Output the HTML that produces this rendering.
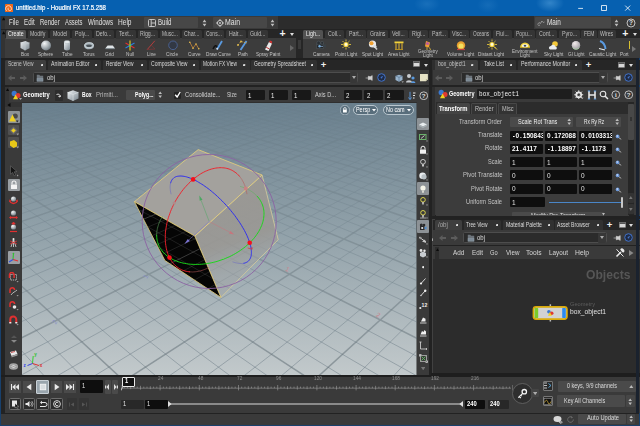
<!DOCTYPE html>
<html><head><meta charset="utf-8"><title>untitled.hip - Houdini FX 17.5.258</title>
<style>
html,body{margin:0;padding:0;background:#2b2b2b;overflow:hidden}
#app{position:relative;width:640px;height:426px;overflow:hidden;background:#262626;font-family:"Liberation Sans",sans-serif}
#app div,#app svg,#app .t{position:absolute}
#app div{box-sizing:border-box}
.t{white-space:nowrap;transform-origin:0 50%;display:block}
</style></head><body><div id="app">
<div style="left:0px;top:0px;width:640px;height:16px;background:#0660b0;background-image:radial-gradient(ellipse 14px 9px at 550px 3px,rgba(120,190,240,.38),rgba(120,190,240,0)),radial-gradient(ellipse 13px 8px at 427px 4px,rgba(120,190,240,.16),rgba(120,190,240,0)),radial-gradient(ellipse 11px 8px at 488px 5px,rgba(120,190,240,.12),rgba(120,190,240,0))"></div>
<svg style="left:4.7px;top:3.6px;" width="8.2" height="8.2" viewBox="0 0 8.2 8.2"><rect x="0" y="0" width="8.2" height="8.2" rx=".8" fill="#f06a1c"/><path d="M1.6 6.8A2.9 2.9 0 1 1 6.4 4.4A1.7 1.7 0 1 1 3.5 3.8" fill="none" stroke="#fde3cf" stroke-width=".9"/></svg>
<span class="t" style="left:16px;top:4.19px;font:7.7px/7.7px 'Liberation Sans',sans-serif;color:#fff;transform:scaleX(0.788);-webkit-text-stroke:.22px #fff">untitled.hip - Houdini FX 17.5.258</span>
<svg style="left:576px;top:3px;" width="58" height="10" viewBox="0 0 58 10"><path d="M2.2 5.4h4.8" stroke="#fff" stroke-width=".8"/><rect x="25.6" y="2.6" width="4.8" height="4.8" fill="none" stroke="#fff" stroke-width=".8"/><path d="M49.2 2.6l5 5M54.2 2.6l-5 5" stroke="#fff" stroke-width=".8"/></svg>
<div style="left:0px;top:16px;width:640px;height:410px;background:#18406c;"></div>
<div style="left:1.4px;top:16px;width:637.2px;height:409.2px;background:#232323;"></div>
<div style="left:5.3px;top:16.3px;width:634px;height:13px;background:#3a3a3a;"></div>
<div style="left:1.3px;top:16.3px;width:3.7px;height:13px;background:#333;"></div>
<svg style="left:1.5px;top:17px;" width="3.5" height="4" viewBox="0 0 3.5 4"><path d="M0 3.2L1.7 .3L3.4 3.2z" fill="#0a0a0a"/></svg>
<span class="t" style="left:9px;top:18.62px;font:8.2px/8.2px 'Liberation Sans',sans-serif;color:#e0e0e0;transform:scaleX(0.742);">File</span>
<span class="t" style="left:24px;top:18.62px;font:8.2px/8.2px 'Liberation Sans',sans-serif;color:#e0e0e0;transform:scaleX(0.757);">Edit</span>
<span class="t" style="left:40px;top:18.62px;font:8.2px/8.2px 'Liberation Sans',sans-serif;color:#e0e0e0;transform:scaleX(0.733);">Render</span>
<span class="t" style="left:65px;top:18.62px;font:8.2px/8.2px 'Liberation Sans',sans-serif;color:#e0e0e0;transform:scaleX(0.711);">Assets</span>
<span class="t" style="left:87.8px;top:18.62px;font:8.2px/8.2px 'Liberation Sans',sans-serif;color:#e0e0e0;transform:scaleX(0.758);">Windows</span>
<span class="t" style="left:117.5px;top:18.62px;font:8.2px/8.2px 'Liberation Sans',sans-serif;color:#e0e0e0;transform:scaleX(0.801);">Help</span>
<div style="left:143.5px;top:17.3px;width:54px;height:11px;background:#474747;border-radius:1px"></div>
<svg style="left:148px;top:19px;" width="8" height="8" viewBox="0 0 8 8"><rect x=".5" y=".5" width="7" height="7" rx="1" fill="none" stroke="#d0d0d0" stroke-width=".9"/><path d="M3.2 .5v7M3.2 4h4" stroke="#d0d0d0" stroke-width=".9"/></svg>
<span class="t" style="left:157.5px;top:18.62px;font:8.2px/8.2px 'Liberation Sans',sans-serif;color:#e0e0e0;transform:scaleX(0.740);">Build</span>
<svg style="left:202px;top:19px;" width="5" height="8" viewBox="0 0 5 8"><path d="M.6 3.2L2.5 .6L4.4 3.2zM.6 4.8L2.5 7.4L4.4 4.8z" fill="#bdbdbd"/></svg>
<div style="left:212.5px;top:17.3px;width:54px;height:11px;background:#474747;border-radius:1px"></div>
<svg style="left:215.5px;top:19px;" width="8" height="8" viewBox="0 0 8 8"><circle cx="4" cy="4" r="2.6" fill="none" stroke="#d0d0d0" stroke-width=".9"/><circle cx="4" cy="4" r=".9" fill="#d0d0d0"/><path d="M4 0v1.6M4 6.4V8M0 4h1.6M6.4 4H8" stroke="#d0d0d0" stroke-width=".9"/></svg>
<span class="t" style="left:225px;top:18.62px;font:8.2px/8.2px 'Liberation Sans',sans-serif;color:#e0e0e0;transform:scaleX(0.844);">Main</span>
<svg style="left:270px;top:19px;" width="5" height="8" viewBox="0 0 5 8"><path d="M.6 3.2L2.5 .6L4.4 3.2zM.6 4.8L2.5 7.4L4.4 4.8z" fill="#bdbdbd"/></svg>
<div style="left:278px;top:16.3px;width:256px;height:13px;background:#2c2c2c;"></div>
<div style="left:534px;top:16.3px;width:106px;height:13px;background:#3a3a3a;"></div>
<div style="left:535px;top:17.3px;width:76px;height:11px;background:#474747;border-radius:1px"></div>
<svg style="left:537px;top:19.5px;" width="8" height="7" viewBox="0 0 8 7"><path d="M.5 4.5l1.5-2 1.5 1 1.3-2.5 1.4 1.5 1.3-.5" fill="none" stroke="#9a9a9a" stroke-width=".9"/><circle cx="2" cy="5.3" r=".8" fill="#9a9a9a"/></svg>
<span class="t" style="left:546.6px;top:18.62px;font:8.2px/8.2px 'Liberation Sans',sans-serif;color:#e0e0e0;transform:scaleX(0.782);">Main</span>
<svg style="left:614px;top:19px;" width="5" height="8" viewBox="0 0 5 8"><path d="M.6 3.2L2.5 .6L4.4 3.2zM.6 4.8L2.5 7.4L4.4 4.8z" fill="#bdbdbd"/></svg>
<svg style="left:626px;top:18px;" width="10" height="10" viewBox="0 0 10 10"><circle cx="5" cy="5" r="4" fill="#3a3a3a" stroke="#cfcfcf" stroke-width=".9"/><text x="5" y="7.3" font-size="6.5" font-weight="bold" text-anchor="middle" fill="#e0e0e0" font-family="Liberation Sans,sans-serif">?</text></svg>
<div style="left:5.3px;top:29.6px;width:290.7px;height:9px;background:#262626;"></div>
<div style="left:5.3px;top:38.4px;width:290.7px;height:19.8px;background:#3c3c3c;"></div>
<div style="left:5.6px;top:30px;width:20.8px;height:8.6px;background:#525252;border-radius:1.5px 1.5px 0 0"></div>
<span class="t" style="left:8.12px;top:31.4px;font:6.4px/6.4px 'Liberation Sans',sans-serif;color:#f0f0f0;transform:scaleX(0.820);">Create</span>
<div style="left:27.6px;top:30.3px;width:20.8px;height:8.6px;background:#353535;border-radius:1.5px 1.5px 0 0"></div>
<span class="t" style="left:30.27px;top:31.4px;font:6.4px/6.4px 'Liberation Sans',sans-serif;color:#bcbcbc;transform:scaleX(0.820);">Modify</span>
<div style="left:49.6px;top:30.3px;width:20.8px;height:8.6px;background:#353535;border-radius:1.5px 1.5px 0 0"></div>
<span class="t" style="left:52.85px;top:31.4px;font:6.4px/6.4px 'Liberation Sans',sans-serif;color:#bcbcbc;transform:scaleX(0.820);">Model</span>
<div style="left:71.6px;top:30.3px;width:20.8px;height:8.6px;background:#353535;border-radius:1.5px 1.5px 0 0"></div>
<span class="t" style="left:74.9px;top:31.4px;font:6.4px/6.4px 'Liberation Sans',sans-serif;color:#bcbcbc;transform:scaleX(0.820);">Poly...</span>
<div style="left:93.6px;top:30.3px;width:20.8px;height:8.6px;background:#353535;border-radius:1.5px 1.5px 0 0"></div>
<span class="t" style="left:96.27px;top:31.4px;font:6.4px/6.4px 'Liberation Sans',sans-serif;color:#bcbcbc;transform:scaleX(0.820);">Defo...</span>
<div style="left:115.6px;top:30.3px;width:20.8px;height:8.6px;background:#353535;border-radius:1.5px 1.5px 0 0"></div>
<span class="t" style="left:119px;top:31.4px;font:6.4px/6.4px 'Liberation Sans',sans-serif;color:#bcbcbc;transform:scaleX(0.820);">Text...</span>
<div style="left:137.6px;top:30.3px;width:20.8px;height:8.6px;background:#353535;border-radius:1.5px 1.5px 0 0"></div>
<span class="t" style="left:140.42px;top:31.4px;font:6.4px/6.4px 'Liberation Sans',sans-serif;color:#bcbcbc;transform:scaleX(0.820);">Rigg...</span>
<div style="left:159.6px;top:30.3px;width:20.8px;height:8.6px;background:#353535;border-radius:1.5px 1.5px 0 0"></div>
<span class="t" style="left:162.1px;top:31.4px;font:6.4px/6.4px 'Liberation Sans',sans-serif;color:#bcbcbc;transform:scaleX(0.766);">Musc...</span>
<div style="left:181.6px;top:30.3px;width:20.8px;height:8.6px;background:#353535;border-radius:1.5px 1.5px 0 0"></div>
<span class="t" style="left:184.27px;top:31.4px;font:6.4px/6.4px 'Liberation Sans',sans-serif;color:#bcbcbc;transform:scaleX(0.820);">Char...</span>
<div style="left:203.6px;top:30.3px;width:20.8px;height:8.6px;background:#353535;border-radius:1.5px 1.5px 0 0"></div>
<span class="t" style="left:206.1px;top:31.4px;font:6.4px/6.4px 'Liberation Sans',sans-serif;color:#bcbcbc;transform:scaleX(0.779);">Cons...</span>
<div style="left:225.6px;top:30.3px;width:20.8px;height:8.6px;background:#353535;border-radius:1.5px 1.5px 0 0"></div>
<span class="t" style="left:229.15px;top:31.4px;font:6.4px/6.4px 'Liberation Sans',sans-serif;color:#bcbcbc;transform:scaleX(0.820);">Hair...</span>
<div style="left:247.6px;top:30.3px;width:20.8px;height:8.6px;background:#353535;border-radius:1.5px 1.5px 0 0"></div>
<span class="t" style="left:250.27px;top:31.4px;font:6.4px/6.4px 'Liberation Sans',sans-serif;color:#bcbcbc;transform:scaleX(0.820);">Guid...</span>
<span class="t" style="left:279.43px;top:28.46px;font:bold 10.5px/10.5px 'Liberation Sans',sans-serif;color:#f4f4f4;">+</span>
<svg style="left:290px;top:33px;" width="4" height="3" viewBox="0 0 4 3"><path d="M0 0h4L2 3z" fill="#ddd"/></svg>
<div style="left:303px;top:29.6px;width:337px;height:9px;background:#262626;"></div>
<div style="left:303px;top:38.4px;width:337px;height:19.8px;background:#3c3c3c;"></div>
<div style="left:303.3px;top:30px;width:19.7px;height:8.6px;background:#525252;border-radius:1.5px 1.5px 0 0"></div>
<span class="t" style="left:306px;top:31.4px;font:6.4px/6.4px 'Liberation Sans',sans-serif;color:#f0f0f0;transform:scaleX(0.820);">Ligh...</span>
<div style="left:324.7px;top:30.3px;width:19.6px;height:8.6px;background:#353535;border-radius:1.5px 1.5px 0 0"></div>
<span class="t" style="left:327.79px;top:31.4px;font:6.4px/6.4px 'Liberation Sans',sans-serif;color:#bcbcbc;transform:scaleX(0.820);">Coll...</span>
<div style="left:345.5px;top:30.3px;width:20.1px;height:8.6px;background:#353535;border-radius:1.5px 1.5px 0 0"></div>
<span class="t" style="left:348.55px;top:31.4px;font:6.4px/6.4px 'Liberation Sans',sans-serif;color:#bcbcbc;transform:scaleX(0.820);">Part...</span>
<div style="left:366.9px;top:30.3px;width:21.3px;height:8.6px;background:#353535;border-radius:1.5px 1.5px 0 0"></div>
<span class="t" style="left:369.82px;top:31.4px;font:6.4px/6.4px 'Liberation Sans',sans-serif;color:#bcbcbc;transform:scaleX(0.820);">Grains</span>
<div style="left:389.5px;top:30.3px;width:18px;height:8.6px;background:#353535;border-radius:1.5px 1.5px 0 0"></div>
<span class="t" style="left:392.08px;top:31.4px;font:6.4px/6.4px 'Liberation Sans',sans-serif;color:#bcbcbc;transform:scaleX(0.820);">Vell...</span>
<div style="left:408.8px;top:30.3px;width:19.2px;height:8.6px;background:#353535;border-radius:1.5px 1.5px 0 0"></div>
<span class="t" style="left:411.69px;top:31.4px;font:6.4px/6.4px 'Liberation Sans',sans-serif;color:#bcbcbc;transform:scaleX(0.820);">Rigi...</span>
<div style="left:429.3px;top:30.3px;width:19.2px;height:8.6px;background:#353535;border-radius:1.5px 1.5px 0 0"></div>
<span class="t" style="left:431.9px;top:31.4px;font:6.4px/6.4px 'Liberation Sans',sans-serif;color:#bcbcbc;transform:scaleX(0.820);">Part...</span>
<div style="left:449.8px;top:30.3px;width:19.2px;height:8.6px;background:#353535;border-radius:1.5px 1.5px 0 0"></div>
<span class="t" style="left:452.3px;top:31.4px;font:6.4px/6.4px 'Liberation Sans',sans-serif;color:#bcbcbc;transform:scaleX(0.820);">Visc...</span>
<div style="left:470.3px;top:30.3px;width:21.2px;height:8.6px;background:#353535;border-radius:1.5px 1.5px 0 0"></div>
<span class="t" style="left:472.8px;top:31.4px;font:6.4px/6.4px 'Liberation Sans',sans-serif;color:#bcbcbc;transform:scaleX(0.735);">Oceans</span>
<div style="left:492.8px;top:30.3px;width:19.5px;height:8.6px;background:#353535;border-radius:1.5px 1.5px 0 0"></div>
<span class="t" style="left:496.14px;top:31.4px;font:6.4px/6.4px 'Liberation Sans',sans-serif;color:#bcbcbc;transform:scaleX(0.820);">Flui...</span>
<div style="left:513.6px;top:30.3px;width:21px;height:8.6px;background:#353535;border-radius:1.5px 1.5px 0 0"></div>
<span class="t" style="left:516.1px;top:31.4px;font:6.4px/6.4px 'Liberation Sans',sans-serif;color:#bcbcbc;transform:scaleX(0.789);">Popu...</span>
<div style="left:536px;top:30.3px;width:21.3px;height:8.6px;background:#353535;border-radius:1.5px 1.5px 0 0"></div>
<span class="t" style="left:538.92px;top:31.4px;font:6.4px/6.4px 'Liberation Sans',sans-serif;color:#bcbcbc;transform:scaleX(0.820);">Cont...</span>
<div style="left:558.6px;top:30.3px;width:21.1px;height:8.6px;background:#353535;border-radius:1.5px 1.5px 0 0"></div>
<span class="t" style="left:561.57px;top:31.4px;font:6.4px/6.4px 'Liberation Sans',sans-serif;color:#bcbcbc;transform:scaleX(0.820);">Pyro...</span>
<div style="left:581px;top:30.3px;width:15.5px;height:8.6px;background:#353535;border-radius:1.5px 1.5px 0 0"></div>
<span class="t" style="left:583.5px;top:31.4px;font:6.4px/6.4px 'Liberation Sans',sans-serif;color:#bcbcbc;transform:scaleX(0.777);">FEM</span>
<div style="left:597.8px;top:30.3px;width:18.2px;height:8.6px;background:#353535;border-radius:1.5px 1.5px 0 0"></div>
<span class="t" style="left:600.3px;top:31.4px;font:6.4px/6.4px 'Liberation Sans',sans-serif;color:#bcbcbc;transform:scaleX(0.807);">Wires</span>
<span class="t" style="left:622.33px;top:28.46px;font:bold 10.5px/10.5px 'Liberation Sans',sans-serif;color:#f4f4f4;">+</span>
<svg style="left:632.6px;top:33px;" width="4" height="3" viewBox="0 0 4 3"><path d="M0 0h4L2 3z" fill="#ddd"/></svg>
<div style="left:296px;top:29.6px;width:7px;height:28.6px;background:#262626;"></div>
<div style="left:298.3px;top:40px;width:2.4px;height:9px;background:#3a3a3a;"></div>
<div style="left:1.3px;top:29.6px;width:3.7px;height:28.6px;background:#333;"></div>
<svg style="left:1.5px;top:31px;" width="3.5" height="4" viewBox="0 0 3.5 4"><path d="M0 3.2L1.7 .3L3.4 3.2z" fill="#0a0a0a"/></svg>
<svg width="0" height="0" style="left:0;top:0"><defs><linearGradient id="gw" x1="0" y1="0" x2="1" y2="1"><stop offset="0" stop-color="#f2f5f7"/><stop offset="1" stop-color="#76828b"/></linearGradient><radialGradient id="gs" cx=".35" cy=".3" r=".8"><stop offset="0" stop-color="#f4f6f7"/><stop offset="1" stop-color="#68737b"/></radialGradient></defs></svg>
<svg style="left:18px;top:38.6px;" width="14" height="12.5" viewBox="0 0 14 12.5"><path d="M2.5 3.5L7.5 2l4 1.8v5.5L7 11.5 2.5 9z" fill="url(#gw)"/><path d="M2.5 3.5L7 5.2l4.5-1.4M7 5.2v6.3" stroke="#c9d0d4" stroke-width=".5" fill="none"/></svg>
<span class="t" style="left:20.94px;top:51.41px;font:6.2px/6.2px 'Liberation Sans',sans-serif;color:#c6c6c6;transform:scaleX(0.760);">Box</span>
<svg style="left:39px;top:38.6px;" width="14" height="12.5" viewBox="0 0 14 12.5"><circle cx="7" cy="6.5" r="5" fill="url(#gs)"/></svg>
<span class="t" style="left:38.4px;top:51.41px;font:6.2px/6.2px 'Liberation Sans',sans-serif;color:#c6c6c6;transform:scaleX(0.760);">Sphere</span>
<svg style="left:60px;top:38.6px;" width="14" height="12.5" viewBox="0 0 14 12.5"><path d="M4 3v7a3 1.4 0 0 0 6 0V3z" fill="url(#gw)"/><ellipse cx="7" cy="3" rx="3" ry="1.4" fill="#e8ecee" stroke="#9aa4aa" stroke-width=".4"/></svg>
<span class="t" style="left:61.72px;top:51.41px;font:6.2px/6.2px 'Liberation Sans',sans-serif;color:#c6c6c6;transform:scaleX(0.760);">Tube</span>
<svg style="left:81.5px;top:38.6px;" width="14" height="12.5" viewBox="0 0 14 12.5"><ellipse cx="7" cy="6.8" rx="4" ry="2.4" fill="#4a5258" stroke="#a9b5bd" stroke-width="2.1"/><ellipse cx="7" cy="6.2" rx="4.3" ry="2.5" fill="none" stroke="#dfe5e8" stroke-width=".6"/></svg>
<span class="t" style="left:82.74px;top:51.41px;font:6.2px/6.2px 'Liberation Sans',sans-serif;color:#c6c6c6;transform:scaleX(0.760);">Torus</span>
<svg style="left:102.5px;top:38.6px;" width="14" height="12.5" viewBox="0 0 14 12.5"><path d="M4.6 6.6h5.2l2 2.6H2.4z" fill="#dfe4e7"/><path d="M2.4 9.2h9.4v.9H2.4z" fill="#8f999f"/></svg>
<span class="t" style="left:105.05px;top:51.41px;font:6.2px/6.2px 'Liberation Sans',sans-serif;color:#c6c6c6;transform:scaleX(0.760);">Grid</span>
<svg style="left:123px;top:38.6px;" width="14" height="12.5" viewBox="0 0 14 12.5"><path d="M7 1.5v10" stroke="#e8d21c" stroke-width="1.1"/><path d="M2.5 4l9 5" stroke="#e03030" stroke-width="1.1"/><path d="M11.5 4l-9 5" stroke="#2a7be0" stroke-width="1.1"/><circle cx="7" cy="6.5" r="1.2" fill="#58c858"/></svg>
<span class="t" style="left:125.94px;top:51.41px;font:6.2px/6.2px 'Liberation Sans',sans-serif;color:#c6c6c6;transform:scaleX(0.760);">Null</span>
<svg style="left:144px;top:38.6px;" width="14" height="12.5" viewBox="0 0 14 12.5"><path d="M3.2 10.6L10.8 1.8" stroke="#c03c3c" stroke-width=".9"/><path d="M3.2 10.6L11 10M7.2 6l3.8 4" stroke="#8a3434" stroke-width=".6"/></svg>
<span class="t" style="left:146.55px;top:51.41px;font:6.2px/6.2px 'Liberation Sans',sans-serif;color:#c6c6c6;transform:scaleX(0.760);">Line</span>
<svg style="left:165.5px;top:38.6px;" width="14" height="12.5" viewBox="0 0 14 12.5"><circle cx="7" cy="6.3" r="4.3" fill="#323844" stroke="#4c6496" stroke-width=".9"/></svg>
<span class="t" style="left:166.48px;top:51.41px;font:6.2px/6.2px 'Liberation Sans',sans-serif;color:#c6c6c6;transform:scaleX(0.760);">Circle</span>
<svg style="left:187px;top:38.6px;" width="14" height="12.5" viewBox="0 0 14 12.5"><path d="M2.8 3.2L6 9.2 9 5l2.8 4.8" fill="none" stroke="#c8883a" stroke-width=".8"/><circle cx="2.8" cy="3.2" r=".8" fill="#e8c050"/><circle cx="6" cy="9.2" r=".8" fill="#e8c050"/><circle cx="9" cy="5" r=".8" fill="#e8c050"/><circle cx="11.8" cy="9.8" r=".8" fill="#e8c050"/></svg>
<span class="t" style="left:187.72px;top:51.41px;font:6.2px/6.2px 'Liberation Sans',sans-serif;color:#c6c6c6;transform:scaleX(0.760);">Curve</span>
<svg style="left:211px;top:38.6px;" width="14" height="12.5" viewBox="0 0 14 12.5"><path d="M2 10c2-4 3-4 4.5-1.5" fill="none" stroke="#111" stroke-width="1.6"/><path d="M6 10.5L11 2" stroke="#5a9ae0" stroke-width="1.8"/><path d="M6 10.5l.3-1.5" stroke="#eee" stroke-width="1.4"/></svg>
<span class="t" style="left:205.56px;top:51.41px;font:6.2px/6.2px 'Liberation Sans',sans-serif;color:#c6c6c6;transform:scaleX(0.760);">Draw Curve</span>
<svg style="left:236px;top:38.6px;" width="14" height="12.5" viewBox="0 0 14 12.5"><path d="M4.5 11L10.5 2" stroke="#5a9ae0" stroke-width="1.8"/><path d="M2 6l3-3.5 6 1.5" fill="none" stroke="#e0b040" stroke-width=".8" stroke-dasharray="1.5 1"/><circle cx="2" cy="6" r=".9" fill="#e8c050"/><circle cx="5" cy="2.5" r=".9" fill="#e8c050"/></svg>
<span class="t" style="left:238.15px;top:51.41px;font:6.2px/6.2px 'Liberation Sans',sans-serif;color:#c6c6c6;transform:scaleX(0.760);">Path</span>
<svg style="left:261px;top:38.6px;" width="14" height="12.5" viewBox="0 0 14 12.5"><path d="M4 10.5L8 3l3 1.5L7.5 12z" fill="#e8e8e8"/><path d="M8 3l1-1.5 2.2 1L11 4.5z" fill="#d03030"/><path d="M5.2 8.3l3.2 1.6" stroke="#c03030" stroke-width="1"/></svg>
<span class="t" style="left:255.82px;top:51.41px;font:6.2px/6.2px 'Liberation Sans',sans-serif;color:#c6c6c6;transform:scaleX(0.760);">Spray Paint</span>
<svg style="left:289.5px;top:45px;" width="4" height="6" viewBox="0 0 4 6"><path d="M0 0v6l4-3z" fill="#666"/></svg>
<svg style="left:314px;top:38.6px;" width="14" height="12.5" viewBox="0 0 14 12.5"><path d="M2.6 4.8h7v4.8h-7z" fill="#23272a" stroke="#565e64" stroke-width=".5"/><circle cx="4.6" cy="4" r="1.9" fill="#2a2f33" stroke="#565e64" stroke-width=".5"/><circle cx="8.2" cy="3.9" r="1.5" fill="#2a2f33" stroke="#565e64" stroke-width=".5"/><path d="M9.6 6.2l2.2-1.3v4L9.6 7.6z" fill="#3a4248"/><circle cx="5.6" cy="7.2" r="1.2" fill="#7ab0e0"/><circle cx="8" cy="7.4" r=".7" fill="#9ac0e8"/></svg>
<span class="t" style="left:312.62px;top:51.41px;font:6.2px/6.2px 'Liberation Sans',sans-serif;color:#c6c6c6;transform:scaleX(0.760);">Camera</span>
<svg style="left:339px;top:38.6px;" width="14" height="12.5" viewBox="0 0 14 12.5"><circle cx="7" cy="5.5" r="2.6" fill="#f2d23a"/><circle cx="7" cy="5.5" r="1.4" fill="#fffbe0"/><path d="M7 .5v2M7 8.5v2M2 5.5h2M10 5.5h2M3.5 2l1.3 1.3M10.5 2L9.2 3.3M3.5 9l1.3-1.3M10.5 9L9.2 7.7" stroke="#f2d23a" stroke-width=".8"/></svg>
<span class="t" style="left:334.87px;top:51.41px;font:6.2px/6.2px 'Liberation Sans',sans-serif;color:#c6c6c6;transform:scaleX(0.760);">Point Light</span>
<svg style="left:365.5px;top:38.6px;" width="14" height="12.5" viewBox="0 0 14 12.5"><circle cx="6.5" cy="5" r="3.6" fill="#e8e8e8"/><circle cx="5.5" cy="4.2" r="2" fill="#f0a030"/><path d="M8 7l3 3.5" stroke="#ccc" stroke-width="1.6"/><circle cx="9" cy="7.5" r="1.6" fill="#d8dde0"/></svg>
<span class="t" style="left:361.89px;top:51.41px;font:6.2px/6.2px 'Liberation Sans',sans-serif;color:#c6c6c6;transform:scaleX(0.760);">Spot Light</span>
<svg style="left:391.5px;top:38.6px;" width="14" height="12.5" viewBox="0 0 14 12.5"><path d="M2.5 2.5h9v1.8h-9z" fill="#f2d23a"/><path d="M4 4.3v6M7 4.3v6M10 4.3v6" stroke="#e8b830" stroke-width="1"/><path d="M3 10.5h8" stroke="#caa020" stroke-width=".8"/></svg>
<span class="t" style="left:387.76px;top:51.41px;font:6.2px/6.2px 'Liberation Sans',sans-serif;color:#c6c6c6;transform:scaleX(0.760);">Area Light</span>
<svg style="left:420.5px;top:38.6px;" width="14" height="12.5" viewBox="0 0 14 12.5"><path d="M5 2l4 1.5-1 5-4-1z" fill="#f0a030"/><circle cx="6.5" cy="4.5" r="1.6" fill="#c05a9a"/><path d="M6 8v3M8.5 8.5l1 2.5" stroke="#e8c040" stroke-width=".8"/></svg>
<span class="t" style="left:417.57px;top:48.63px;font:5.8px/5.8px 'Liberation Sans',sans-serif;color:#c6c6c6;transform:scaleX(0.780);">Geometry</span>
<span class="t" style="left:422.6px;top:52.93px;font:5.8px/5.8px 'Liberation Sans',sans-serif;color:#c6c6c6;transform:scaleX(0.780);">Light</span>
<svg style="left:454px;top:38.6px;" width="14" height="12.5" viewBox="0 0 14 12.5"><circle cx="7" cy="6.5" r="4.2" fill="#e8a030"/><circle cx="7" cy="7" r="2.6" fill="#f4e060"/><path d="M3 10.5h8" stroke="#c04040" stroke-width="1.2"/></svg>
<span class="t" style="left:447.38px;top:51.41px;font:6.2px/6.2px 'Liberation Sans',sans-serif;color:#c6c6c6;transform:scaleX(0.760);">Volume Light</span>
<svg style="left:484.5px;top:38.6px;" width="14" height="12.5" viewBox="0 0 14 12.5"><circle cx="7" cy="5.5" r="2.6" fill="#f2d23a"/><circle cx="7" cy="5.5" r="1.4" fill="#fffbe0"/><path d="M7 .5v2M7 8.5v2M2 5.5h2M10 5.5h2M3.5 2l1.3 1.3M10.5 2L9.2 3.3M3.5 9l1.3-1.3M10.5 9L9.2 7.7" stroke="#f2d23a" stroke-width=".8"/><path d="M9 7.5l3 3" stroke="#f2d23a" stroke-width="1"/></svg>
<span class="t" style="left:478.4px;top:51.41px;font:6.2px/6.2px 'Liberation Sans',sans-serif;color:#c6c6c6;transform:scaleX(0.760);">Distant Light</span>
<svg style="left:518px;top:38.6px;" width="14" height="12.5" viewBox="0 0 14 12.5"><path d="M2 8.6a5 5.2 0 0 1 10 0z" fill="#f0d23a"/><ellipse cx="7" cy="6.8" rx="3" ry="1.9" fill="#f8f4e0"/><ellipse cx="7" cy="6.8" rx="1.3" ry="1" fill="#3a4a5a"/><path d="M2 8.6h10" stroke="#c8a820" stroke-width=".7"/></svg>
<span class="t" style="left:512.3px;top:48.63px;font:5.8px/5.8px 'Liberation Sans',sans-serif;color:#c6c6c6;transform:scaleX(0.780);">Environment</span>
<span class="t" style="left:520.1px;top:52.93px;font:5.8px/5.8px 'Liberation Sans',sans-serif;color:#c6c6c6;transform:scaleX(0.780);">Light</span>
<svg style="left:546.5px;top:38.6px;" width="14" height="12.5" viewBox="0 0 14 12.5"><circle cx="8" cy="5" r="2.8" fill="#f2c83a"/><path d="M2 9.5a2 2 0 0 1 2-2.5 2.4 2.4 0 0 1 4.4.5A1.6 1.6 0 0 1 9 10.5H3z" fill="#e8ecf0"/></svg>
<span class="t" style="left:543.81px;top:51.41px;font:6.2px/6.2px 'Liberation Sans',sans-serif;color:#c6c6c6;transform:scaleX(0.760);">Sky Light</span>
<svg style="left:569px;top:38.6px;" width="14" height="12.5" viewBox="0 0 14 12.5"><circle cx="7" cy="6.2" r="4.2" fill="url(#gs)"/><circle cx="7" cy="6.2" r="4.2" fill="#f0d8d8" fill-opacity=".35"/><path d="M3.5 8.5a4.2 4.2 0 0 0 7 0" stroke="#a8d8a0" stroke-width="1" fill="none" stroke-opacity=".7"/></svg>
<span class="t" style="left:567.75px;top:51.41px;font:6.2px/6.2px 'Liberation Sans',sans-serif;color:#c6c6c6;transform:scaleX(0.760);">GI Light</span>
<svg style="left:595.5px;top:38.6px;" width="14" height="12.5" viewBox="0 0 14 12.5"><path d="M4 2c3 1 5 4 5.5 8" fill="none" stroke="#5a9ae0" stroke-width="2"/><path d="M3 9.5l6 1.5" stroke="#e8ecf0" stroke-width="1.2"/></svg>
<span class="t" style="left:588.88px;top:51.41px;font:6.2px/6.2px 'Liberation Sans',sans-serif;color:#c6c6c6;transform:scaleX(0.760);">Caustic Light</span>
<div style="left:628.6px;top:40.6px;width:1.2px;height:8.4px;background:#d8c030;"></div>
<span class="t" style="left:620.48px;top:51.41px;font:6.2px/6.2px 'Liberation Sans',sans-serif;color:#c6c6c6;transform:scaleX(0.760);">Port</span>
<svg style="left:632.2px;top:45.5px;" width="4" height="6" viewBox="0 0 4 6"><path d="M0 0v6l4-3z" fill="#777"/></svg>
<div style="left:1.3px;top:58.2px;width:638px;height:1.6px;background:#202020;"></div>
<div style="left:5.3px;top:59.6px;width:423.7px;height:10.2px;background:#262626;"></div>
<div style="left:5.3px;top:59.8px;width:41.2px;height:10px;background:#3e3e3e;border-radius:1.5px 1.5px 0 0"></div>
<span class="t" style="left:8px;top:61.03px;font:6.9px/6.9px 'Liberation Sans',sans-serif;color:#c4c4c4;transform:scaleX(0.702);">Scene View</span>
<svg style="left:40.9px;top:63.6px;" width="2.2" height="2.2" viewBox="0 0 2.2 2.2"><rect width="2.2" height="2.2" rx=".5" fill="#d8d8d8"/></svg>
<div style="left:48px;top:60.1px;width:53px;height:9.7px;background:#313131;border-radius:1.5px 1.5px 0 0"></div>
<span class="t" style="left:50.6px;top:61.03px;font:6.9px/6.9px 'Liberation Sans',sans-serif;color:#dadada;transform:scaleX(0.759);">Animation Editor</span>
<svg style="left:94.9px;top:63.6px;" width="2.2" height="2.2" viewBox="0 0 2.2 2.2"><rect width="2.2" height="2.2" rx=".5" fill="#d8d8d8"/></svg>
<div style="left:102.5px;top:60.1px;width:44.5px;height:9.7px;background:#313131;border-radius:1.5px 1.5px 0 0"></div>
<span class="t" style="left:105.5px;top:61.03px;font:6.9px/6.9px 'Liberation Sans',sans-serif;color:#dadada;transform:scaleX(0.698);">Render View</span>
<svg style="left:140.9px;top:63.6px;" width="2.2" height="2.2" viewBox="0 0 2.2 2.2"><rect width="2.2" height="2.2" rx=".5" fill="#d8d8d8"/></svg>
<div style="left:148.5px;top:60.1px;width:50.5px;height:9.7px;background:#313131;border-radius:1.5px 1.5px 0 0"></div>
<span class="t" style="left:150.5px;top:61.03px;font:6.9px/6.9px 'Liberation Sans',sans-serif;color:#dadada;transform:scaleX(0.734);">Composite View</span>
<svg style="left:192.9px;top:63.6px;" width="2.2" height="2.2" viewBox="0 0 2.2 2.2"><rect width="2.2" height="2.2" rx=".5" fill="#d8d8d8"/></svg>
<div style="left:200.5px;top:60.1px;width:49px;height:9.7px;background:#313131;border-radius:1.5px 1.5px 0 0"></div>
<span class="t" style="left:203px;top:61.03px;font:6.9px/6.9px 'Liberation Sans',sans-serif;color:#dadada;transform:scaleX(0.706);">Motion FX View</span>
<svg style="left:243.4px;top:63.6px;" width="2.2" height="2.2" viewBox="0 0 2.2 2.2"><rect width="2.2" height="2.2" rx=".5" fill="#d8d8d8"/></svg>
<div style="left:251px;top:60.1px;width:66px;height:9.7px;background:#313131;border-radius:1.5px 1.5px 0 0"></div>
<span class="t" style="left:254px;top:61.03px;font:6.9px/6.9px 'Liberation Sans',sans-serif;color:#dadada;transform:scaleX(0.729);">Geometry Spreadsheet</span>
<svg style="left:310.9px;top:63.6px;" width="2.2" height="2.2" viewBox="0 0 2.2 2.2"><rect width="2.2" height="2.2" rx=".5" fill="#d8d8d8"/></svg>
<span class="t" style="left:320.63px;top:59.91px;font:bold 9.5px/9.5px 'Liberation Sans',sans-serif;color:#f0f0f0;">+</span>
<svg style="left:413.3px;top:61.3px;" width="7" height="6" viewBox="0 0 7 6"><rect x=".4" y=".4" width="6.2" height="5" fill="#d8d8d8" stroke="#888" stroke-width=".5"/><rect x=".4" y=".4" width="6.2" height="1.6" fill="#555"/></svg>
<svg style="left:424px;top:63.6px;" width="4" height="3" viewBox="0 0 4 3"><path d="M0 0h4L2 3z" fill="#ddd"/></svg>
<div style="left:433px;top:59.6px;width:207px;height:10.2px;background:#262626;"></div>
<div style="left:433.5px;top:59.8px;width:44.5px;height:10px;background:#3e3e3e;border-radius:1.5px 1.5px 0 0"></div>
<span class="t" style="left:437.5px;top:61.03px;font:6.9px/6.9px 'Liberation Sans',sans-serif;color:#c4c4c4;transform:scaleX(0.739);">box_object1</span>
<svg style="left:471.4px;top:63.6px;" width="2.2" height="2.2" viewBox="0 0 2.2 2.2"><rect width="2.2" height="2.2" rx=".5" fill="#d8d8d8"/></svg>
<div style="left:479.5px;top:60.1px;width:36.5px;height:9.7px;background:#313131;border-radius:1.5px 1.5px 0 0"></div>
<span class="t" style="left:484px;top:61.03px;font:6.9px/6.9px 'Liberation Sans',sans-serif;color:#dadada;transform:scaleX(0.735);">Take List</span>
<svg style="left:509.9px;top:63.6px;" width="2.2" height="2.2" viewBox="0 0 2.2 2.2"><rect width="2.2" height="2.2" rx=".5" fill="#d8d8d8"/></svg>
<div style="left:517.5px;top:60.1px;width:64px;height:9.7px;background:#313131;border-radius:1.5px 1.5px 0 0"></div>
<span class="t" style="left:520.8px;top:61.03px;font:6.9px/6.9px 'Liberation Sans',sans-serif;color:#dadada;transform:scaleX(0.764);">Performance Monitor</span>
<svg style="left:574.9px;top:63.6px;" width="2.2" height="2.2" viewBox="0 0 2.2 2.2"><rect width="2.2" height="2.2" rx=".5" fill="#d8d8d8"/></svg>
<span class="t" style="left:585.63px;top:59.91px;font:bold 9.5px/9.5px 'Liberation Sans',sans-serif;color:#f0f0f0;">+</span>
<svg style="left:618px;top:62px;" width="7" height="6" viewBox="0 0 7 6"><rect x=".4" y=".4" width="6.2" height="5" fill="#d8d8d8" stroke="#888" stroke-width=".5"/><rect x=".4" y=".4" width="6.2" height="1.6" fill="#555"/></svg>
<svg style="left:629.3px;top:64px;" width="4" height="3" viewBox="0 0 4 3"><path d="M0 0h4L2 3z" fill="#ddd"/></svg>
<div style="left:428.5px;top:59.6px;width:3px;height:314px;background:#222;"></div>
<div style="left:431.5px;top:59.6px;width:3.6px;height:156px;background:#2e2e2e;"></div>
<div style="left:431.5px;top:219.2px;width:3.6px;height:154px;background:#414141;"></div>
<svg style="left:432.2px;top:238px;" width="2.4" height="3.4" viewBox="0 0 2.4 3.4"><path d="M0 0v3.4l2.4-1.7z" fill="#aaa"/></svg>
<div style="left:5.3px;top:69.8px;width:423.7px;height:15.6px;background:#3a3a3a;"></div>
<svg style="left:7.8px;top:74.6px;" width="7" height="6" viewBox="0 0 7 6"><path d="M0 3L3.5 0v2h3.5v2H3.5v2z" fill="#5c5c5c"/></svg>
<svg style="left:19.8px;top:74.6px;" width="7" height="6" viewBox="0 0 7 6"><path d="M7 3L3.5 0v2H0v2h3.5v2z" fill="#5c5c5c"/></svg>
<div style="left:32.8px;top:71.6px;width:325.2px;height:11.8px;background:#2b2b2b;border:0.6px solid #4d4d4d;border-radius:1.5px"></div>
<svg style="left:36.3px;top:73.6px;" width="8.5" height="8" viewBox="0 0 8.5 8"><path d="M.8 .8h2.6l.6 1H7.2v5.6H.8z" fill="#6d747b"/><path d="M.8 4.2h6.4v3.2H.8z" fill="#8c9aa5"/><path d="M1.5 5.2h5M1.5 6.3h5" stroke="#6a7680" stroke-width=".5"/></svg>
<span class="t" style="left:47px;top:74.07px;font:7px/7px 'Liberation Sans',sans-serif;color:#dcdcdc;transform:scaleX(0.856);">obj</span>
<div style="left:349.8px;top:72.3px;width:7.5px;height:10.4px;background:#373737;border-radius:1px"></div>
<svg style="left:351.5px;top:76.3px;" width="4" height="3" viewBox="0 0 4 3"><path d="M0 0h4L2 3z" fill="#aaa"/></svg>
<svg style="left:364.5px;top:73.6px;" width="8" height="8" viewBox="0 0 8 8"><path d="M.6 4h2.8M3.4 1.8v4.4M3.4 2.6h2.4l1.4-1v4.8l-1.4-1H3.4z" fill="#cfcfcf" stroke="#cfcfcf" stroke-width=".6"/></svg>
<svg style="left:376.5px;top:73.1px;" width="9" height="9" viewBox="0 0 9 9"><circle cx="4.5" cy="4.5" r="3.8" fill="#1f2b45" stroke="#4272c8" stroke-width="1"/><circle cx="4.5" cy="4.5" r=".9" fill="#4272c8"/><path d="M4.5 4.5L6.3 2.7" stroke="#4272c8" stroke-width=".7"/></svg>
<svg style="left:393.5px;top:73px;" width="10" height="10" viewBox="0 0 10 10"><path d="M1.5 3l3.5-1.3L8.5 3v4L5 8.8 1.5 7z" fill="#9ab4cc"/><path d="M1.5 3L5 4.3 8.5 3M5 4.3v4.5" stroke="#4f6d8a" stroke-width=".6" fill="none"/><path d="M7.5 8.3h2.4L8.7 9.9z" fill="#999"/></svg>
<svg style="left:405px;top:72.5px;" width="11" height="10" viewBox="0 0 11 10"><circle cx="4" cy="3" r="2" fill="#c8ccd0"/><path d="M1 9.5c0-3 6-3 6 0z" fill="#c8ccd0"/><circle cx="8" cy="5" r="1.6" fill="#5a9ae0"/><path d="M6 10c0-2.4 4.4-2.4 4.4 0z" fill="#5a9ae0"/></svg>
<svg style="left:419.7px;top:74px;" width="8.2" height="7.6" viewBox="0 0 8.2 7.6"><path d="M0 0h7.9v5.2l-2 2H0z" fill="#e6e3c6"/><path d="M7.9 5.2H5.9v2z" fill="#b4b090"/></svg>
<div style="left:433px;top:69.8px;width:207px;height:15.6px;background:#3a3a3a;"></div>
<svg style="left:435px;top:74.6px;" width="7" height="6" viewBox="0 0 7 6"><path d="M0 3L3.5 0v2h3.5v2H3.5v2z" fill="#5c5c5c"/></svg>
<svg style="left:446px;top:74.6px;" width="7" height="6" viewBox="0 0 7 6"><path d="M7 3L3.5 0v2H0v2h3.5v2z" fill="#5c5c5c"/></svg>
<div style="left:461px;top:71.6px;width:146.5px;height:11.8px;background:#2b2b2b;border:0.6px solid #4d4d4d;border-radius:1.5px"></div>
<svg style="left:464.5px;top:73.6px;" width="8.5" height="8" viewBox="0 0 8.5 8"><path d="M.8 .8h2.6l.6 1H7.2v5.6H.8z" fill="#6d747b"/><path d="M.8 4.2h6.4v3.2H.8z" fill="#8c9aa5"/><path d="M1.5 5.2h5M1.5 6.3h5" stroke="#6a7680" stroke-width=".5"/></svg>
<span class="t" style="left:475.2px;top:74.07px;font:7px/7px 'Liberation Sans',sans-serif;color:#dcdcdc;transform:scaleX(0.856);">obj</span>
<div style="left:599.3px;top:72.3px;width:7.5px;height:10.4px;background:#373737;border-radius:1px"></div>
<svg style="left:601px;top:76.3px;" width="4" height="3" viewBox="0 0 4 3"><path d="M0 0h4L2 3z" fill="#aaa"/></svg>
<svg style="left:612.6px;top:73.6px;" width="8" height="8" viewBox="0 0 8 8"><path d="M.6 4h2.8M3.4 1.8v4.4M3.4 2.6h2.4l1.4-1v4.8l-1.4-1H3.4z" fill="#cfcfcf" stroke="#cfcfcf" stroke-width=".6"/></svg>
<svg style="left:623.8px;top:73.1px;" width="9" height="9" viewBox="0 0 9 9"><circle cx="4.5" cy="4.5" r="3.8" fill="#1f2b45" stroke="#4272c8" stroke-width="1"/><circle cx="4.5" cy="4.5" r=".9" fill="#4272c8"/><path d="M4.5 4.5L6.3 2.7" stroke="#4272c8" stroke-width=".7"/></svg>
<div style="left:1.3px;top:85.4px;width:638px;height:1.3px;background:#222;"></div>
<div style="left:5.3px;top:86.7px;width:423.7px;height:15.3px;background:#3a3a3a;"></div>
<div style="left:5.3px;top:86.7px;width:3.8px;height:15.3px;background:#333;"></div>
<svg style="left:5.6px;top:88px;" width="3.2" height="3.5" viewBox="0 0 3.2 3.5"><path d="M0 3L1.6 .3L3.2 3z" fill="#0a0a0a"/></svg>
<svg style="left:11.3px;top:90.1px;" width="10" height="10" viewBox="0 0 10 10"><circle cx="3.2" cy="3.4" r="2.6" fill="#3a78d0"/><circle cx="7" cy="5.6" r="2.5" fill="#e03a30"/><path d="M2 9.2L4.6 4.4L7.2 9.2z" fill="#f0d020"/></svg>
<svg style="left:18.5px;top:98.3px;" width="3" height="2" viewBox="0 0 3 2"><path d="M0 0h3L1.5 2z" fill="#aaa"/></svg>
<span class="t" style="left:23px;top:91.79px;font:bold 6.6px/6.6px 'Liberation Sans',sans-serif;color:#fff;transform:scaleX(0.870);">Geometry</span>
<div style="left:54.5px;top:89.5px;width:8.5px;height:11px;background:#2d2d2d;border-radius:1px"></div>
<svg style="left:56.3px;top:92.6px;" width="5" height="5" viewBox="0 0 5 5"><path d="M.5 1.5c2.5-1 3.5 0 3.5 2.5M4 4L2.4 3.4M4 4l.7-1.6" stroke="#e8e8e8" stroke-width=".9" fill="none"/></svg>
<svg style="left:65.5px;top:88.8px;" width="14" height="13" viewBox="0 0 14 13"><path d="M1.5 3.3L7 1.3l5.5 2v6.2L7 12 1.5 9.5z" fill="url(#gw)"/><path d="M1.5 3.3L7 5.4l5.5-2.1M7 5.4V12" stroke="#dfe5e8" stroke-width=".6" fill="none"/></svg>
<span class="t" style="left:82px;top:91.79px;font:bold 6.6px/6.6px 'Liberation Sans',sans-serif;color:#fff;transform:scaleX(0.770);">Box</span>
<span class="t" style="left:96px;top:91.79px;font:6.6px/6.6px 'Liberation Sans',sans-serif;color:#b8b8b8;transform:scaleX(0.923);">Primiti...</span>
<div style="left:126px;top:89.8px;width:28.5px;height:10.5px;background:#4a4a4a;border-radius:1px"></div>
<span class="t" style="left:134.5px;top:91.9px;font:bold 6.4px/6.4px 'Liberation Sans',sans-serif;color:#fff;transform:scaleX(0.813);">Polyg...</span>
<svg style="left:158px;top:91.3px;" width="4.4" height="7.6" viewBox="0 0 4.4 7.6"><path d="M.4 3L2.2 .5L4 3zM.4 4.6L2.2 7.1L4 4.6z" fill="#bdbdbd"/></svg>
<div style="left:174.3px;top:92px;width:6.6px;height:6.6px;background:#242424;border-radius:1px"></div>
<svg style="left:174px;top:91.1px;" width="7" height="7" viewBox="0 0 7 7"><path d="M1.2 3.8l1.9 2.2L6.2 1" stroke="#fff" stroke-width="1.4" fill="none"/></svg>
<span class="t" style="left:184.5px;top:91.79px;font:6.6px/6.6px 'Liberation Sans',sans-serif;color:#d0d0d0;transform:scaleX(0.880);">Consolidate...</span>
<span class="t" style="left:227.3px;top:91.79px;font:6.6px/6.6px 'Liberation Sans',sans-serif;color:#d0d0d0;transform:scaleX(0.756);">Size</span>
<div style="left:245.5px;top:90.4px;width:19.5px;height:10px;background:#181818;border-radius:1px"></div>
<span class="t" style="left:247.7px;top:92.37px;font:7px/7px 'Liberation Sans',sans-serif;color:#f0f0f0;transform:scaleX(0.874);">1</span>
<div style="left:269px;top:90.4px;width:19px;height:10px;background:#181818;border-radius:1px"></div>
<span class="t" style="left:271.2px;top:92.37px;font:7px/7px 'Liberation Sans',sans-serif;color:#f0f0f0;transform:scaleX(0.874);">1</span>
<div style="left:292px;top:90.4px;width:19px;height:10px;background:#181818;border-radius:1px"></div>
<span class="t" style="left:294.2px;top:92.37px;font:7px/7px 'Liberation Sans',sans-serif;color:#f0f0f0;transform:scaleX(0.874);">1</span>
<div style="left:343.5px;top:90.4px;width:18.5px;height:10px;background:#181818;border-radius:1px"></div>
<span class="t" style="left:345.7px;top:92.37px;font:7px/7px 'Liberation Sans',sans-serif;color:#f0f0f0;transform:scaleX(0.874);">2</span>
<div style="left:364.3px;top:90.4px;width:18.4px;height:10px;background:#181818;border-radius:1px"></div>
<span class="t" style="left:366.5px;top:92.37px;font:7px/7px 'Liberation Sans',sans-serif;color:#f0f0f0;transform:scaleX(0.874);">2</span>
<div style="left:385px;top:90.4px;width:19px;height:10px;background:#181818;border-radius:1px"></div>
<span class="t" style="left:387.2px;top:92.37px;font:7px/7px 'Liberation Sans',sans-serif;color:#f0f0f0;transform:scaleX(0.874);">2</span>
<span class="t" style="left:314.5px;top:91.79px;font:6.6px/6.6px 'Liberation Sans',sans-serif;color:#d0d0d0;transform:scaleX(0.855);">Axis D...</span>
<svg style="left:407.5px;top:90.8px;" width="8" height="9.5" viewBox="0 0 8 9.5"><path d="M2 .8v7.4M.5 6.5L2 8.6l1.5-2.1" stroke="#5a9ae0" stroke-width=".9" fill="none"/><path d="M5 2h2.5M5 4.5h2M5 7h1.5" stroke="#e8e8e8" stroke-width="1"/></svg>
<svg style="left:418.5px;top:90.8px;" width="9.5" height="9.5" viewBox="0 0 9.5 9.5"><circle cx="4.75" cy="4.75" r="3.9" fill="#3a3a3a" stroke="#cfcfcf" stroke-width=".9"/><text x="4.75" y="7" font-size="6.2" font-weight="bold" text-anchor="middle" fill="#e0e0e0" font-family="Liberation Sans,sans-serif">?</text></svg>
<div style="left:5.3px;top:102px;width:423.7px;height:273px;background:#2f2f2f;"></div>
<svg class="vp" style="position:absolute;left:22px;top:103px" width="394.5" height="272" viewBox="0 0 394.5 272">
<defs><linearGradient id="bgg" x1="0" y1="0" x2="0" y2="1"><stop offset="0" stop-color="#6a808e"/><stop offset="0.485" stop-color="#92a2aa"/><stop offset="1" stop-color="#c2c9cb"/></linearGradient></defs>
<rect width="394.5" height="272" fill="url(#bgg)"/>
<defs><linearGradient id="fadeg" gradientUnits="userSpaceOnUse" x1="0" y1="0" x2="0" y2="272"><stop offset="0" stop-color="#fff" stop-opacity=".14"/><stop offset=".45" stop-color="#fff" stop-opacity=".52"/><stop offset="1" stop-color="#fff" stop-opacity="1"/></linearGradient><mask id="fade" maskUnits="userSpaceOnUse" x="0" y="0" width="395" height="272"><rect width="395" height="272" fill="url(#fadeg)"/></mask></defs>
<g mask="url(#fade)">
<path id="gmin" d="M201.9 -64.8L-1299.7 142.1M195.2 -64.8L1734.4 142.7M205.3 -64.3L-1322.2 148.7M191.8 -64.3L1758 149.5M208.8 -63.9L-1345.7 155.6M188.3 -63.9L1782.8 156.6M212.3 -63.4L-1370.5 162.8M184.8 -63.4L1808.8 164.1M219.4 -62.5L-1423.7 178.5M177.7 -62.4L1865 180.3M223 -62L-1452.5 187M174.1 -61.9L1895.3 189M226.7 -61.5L-1482.9 195.9M170.4 -61.4L1927.4 198.2M230.4 -61L-1515 205.3M166.7 -60.9L1961.4 208M238 -60L-1584.9 225.9M159.1 -59.9L2035.5 229.3M241.8 -59.5L-1623.1 237.1M155.2 -59.3L2076 241M245.8 -59L-1663.7 249M151.3 -58.8L2119.2 253.4M249.7 -58.4L-1707 261.7M147.3 -58.3L2165.4 266.7M257.8 -57.4L-1802.7 289.9M139.2 -57.2L2267.6 296.1M262 -56.8L-1855.8 305.5M135.1 -56.6L2324.5 312.4M266.2 -56.2L-1913 322.3M130.9 -56L2385.8 330.1M270.4 -55.7L-1974.6 340.4M126.7 -55.5L2452 349.1M279.1 -54.5L-2113.6 381.2M118 -54.3L2602.1 392.3M283.5 -53.9L-2192.5 404.4M113.6 -53.7L2687.5 416.8M288 -53.3L-2278.7 429.7M109.1 -53.1L2781.1 443.8M292.6 -52.7L-2373.3 457.5M104.5 -52.4L2884.3 473.5M301.9 -51.5L-2593.4 522.2M95.2 -51.2L3125.7 542.9M306.7 -50.9L-2722.5 560.1M90.5 -50.5L3268.1 583.9M311.5 -50.2L-2867.2 602.7M85.6 -49.9L3428.6 630M316.4 -49.6L-3030.8 650.7M80.7 -49.2L3611.1 682.5M326.4 -48.2L-3431.1 768.4M70.7 -47.8L4062.2 812.3M331.6 -47.5L-3679.6 841.4M65.6 -47.2L4345.7 893.8M336.8 -46.8L-3971.7 927.2M60.4 -46.4L4682.3 990.6M342.1 -46.1L-4319.9 1029.5M55.2 -45.7L5088.4 1107.5M352.9 -44.7L-5264.7 1307.2M44.4 -44.3L6217.9 1432.3M358.4 -44L-5928.4 1502.2M38.8 -43.5L7036.2 1667.7M364.1 -43.2L-6799.2 1758.1M33.2 -42.7L8142.5 1985.9M369.8 -42.4L-7992 2108.6M27.5 -42L9721.4 2440.1M381.5 -40.9L-12476.6 3426.4M15.9 -40.4L16411.8 4364.5M387.5 -40.1L-17314 4851.4M9.9 -39.6L17483 4773.2M393.6 -39.3L-16863.4 4850.4M3.8 -38.7L17036.7 4774.2M399.8 -38.4L-16412.9 4849.3M-2.4 -37.9L16590.4 4775.2M412.6 -36.7L-15511.7 4847.3M-15 -36.2L15697.9 4777.2M419.1 -35.9L-15061.2 4846.3M-21.5 -35.3L15251.6 4778.2M425.8 -35L-14610.6 4845.3M-28.1 -34.4L14805.4 4779.2M432.5 -34.1L-14160.1 4844.3M-34.9 -33.5L14359.1 4780.2M446.4 -32.2L-13258.9 4842.3M-48.7 -31.6L13466.6 4782.2M453.5 -31.3L-12808.4 4841.2M-55.7 -30.6L13020.3 4783.2M460.8 -30.3L-12357.8 4840.2M-63 -29.7L12574 4784.2M468.2 -29.3L-11907.2 4839.2M-70.3 -28.7L12127.8 4785.2M483.4 -27.3L-11006.1 4837.2M-85.4 -26.6L11235.2 4787.2M491.2 -26.3L-10555.6 4836.2M-93.1 -25.5L10789 4788.2M499.2 -25.2L-10105 4835.2M-101 -24.5L10342.7 4789.2M507.3 -24.1L-9654.4 4834.2M-109.1 -23.4L9896.4 4790.2M524 -21.9L-8753.3 4832.1M-125.6 -21.1L9003.9 4792.2M532.6 -20.8L-8302.7 4831.1M-134.1 -20L8557.6 4793.2M541.4 -19.6L-7852.2 4830.1M-142.8 -18.8L8111.4 4794.2M550.3 -18.4L-7401.6 4829.1M-151.7 -17.6L7665.1 4795.2M568.8 -16L-6500.5 4827.1M-169.9 -15.1L6772.6 4797.2M578.3 -14.7L-6049.9 4826.1M-179.3 -13.8L6326.3 4798.2M588 -13.4L-5599.4 4825M-188.9 -12.5L5880 4799.2M597.9 -12.1L-5148.8 4824M-198.7 -11.2L5433.8 4800.2M618.4 -9.3L-4247.7 4822M-219 -8.4L4541.2 4802.2M629 -7.9L-3797.1 4821M-229.4 -7L4095 4803.3M639.8 -6.5L-3346.6 4820M-240.1 -5.5L3648.7 4804.3M650.9 -5L-2896 4819M-251 -4.1L3202.4 4805.3M673.7 -2L-1994.9 4816.9M-273.5 -1L2309.9 4807.3M685.6 -0.4L-1544.3 4815.9M-285.2 0.6L1863.6 4808.3M697.7 1.2L-1093.7 4814.9M-297.1 2.2L1417.4 4809.3M710.1 2.9L-643.2 4813.9M-309.3 3.9L971.1 4810.3M735.8 6.3L257.9 4811.9M-334.6 7.3L78.6 4812.3" stroke="#5a6b77" stroke-opacity=".42" stroke-width="1" fill="none"/>
<path id="gmaj" d="M198.5 -65.2L-1278.3 135.8M198.5 -65.2L1711.9 136.2M215.8 -62.9L-1396.4 170.5M181.3 -62.9L1836.1 172M234.1 -60.5L-1548.9 215.3M162.9 -60.4L1997.3 218.3M253.7 -57.9L-1753.2 275.3M143.3 -57.7L2214.7 280.9M274.7 -55.1L-2041.3 360M122.4 -54.9L2523.9 369.8M297.2 -52.1L-2477.7 488.2M99.9 -51.8L2998.5 506.3M321.4 -48.9L-3217 705.5M75.8 -48.5L3820.1 742.6M347.4 -45.4L-4742.1 1153.6M49.8 -45L5588.1 1251.2M375.6 -41.7L-9725.8 2618.1M21.7 -41.2L12158 3140.9M406.2 -37.6L-15962.3 4848.3M-8.7 -37L16144.2 4776.2M439.4 -33.2L-13709.5 4843.3M-41.7 -32.5L13912.8 4781.2M475.7 -28.3L-11456.7 4838.2M-77.8 -27.6L11681.5 4786.2M515.6 -23L-9203.9 4833.1M-117.3 -22.3L9450.2 4791.2M559.5 -17.2L-6951.1 4828.1M-160.7 -16.3L7218.8 4796.2M608.1 -10.7L-4698.2 4823M-208.7 -9.8L4987.5 4801.2M662.2 -3.5L-2445.4 4817.9M-262.1 -2.5L2756.2 4806.3M722.8 4.5L-192.6 4812.9M-321.8 5.6L524.8 4811.3" stroke="#56636c" stroke-opacity=".5" stroke-width="1.5" fill="none"/>
</g>
<text x="264.4" y="168.2" font-size="6.6" font-family="Liberation Sans,sans-serif" fill="#c8848c" text-anchor="middle" transform="rotate(30 264.4 168.2)">1</text>
<text x="355.2" y="213.9" font-size="6.6" font-family="Liberation Sans,sans-serif" fill="#c8848c" text-anchor="middle" transform="rotate(30 355.2 213.9)">2</text>
<text x="125.8" y="174.7" font-size="6.6" font-family="Liberation Sans,sans-serif" fill="#8890c4" text-anchor="middle" transform="rotate(-60 125.8 174.7)">1</text>
<text x="34.8" y="220.1" font-size="6.6" font-family="Liberation Sans,sans-serif" fill="#8890c4" text-anchor="middle" transform="rotate(-60 34.8 220.1)">2</text>
<g stroke-width="1" fill="none" font-family="Liberation Sans,sans-serif" font-size="4.6" font-weight="bold"><path d="M10.5 260.5L11.2 253" stroke="#30d030"/><path d="M10.5 260.5L17 262.5" stroke="#e03030"/><path d="M10.5 260.5L5.5 262.5" stroke="#3040e8"/><text x="12.3" y="252.5" fill="#30c030" stroke="none">y</text><text x="17.8" y="264" fill="#e03030" stroke="none">x</text><text x="1.6" y="264.3" fill="#3040e8" stroke="none">z</text></g>
<defs><linearGradient id="rfg" gradientUnits="userSpaceOnUse" x1="207.8" y1="101.3" x2="228.5" y2="164.6"><stop offset="0" stop-color="#9a9894" stop-opacity=".97"/><stop offset=".55" stop-color="#9a9894" stop-opacity=".9"/><stop offset="1" stop-color="#a2a4a4" stop-opacity=".5"/></linearGradient></defs>
<polygon points="172.8,133.1 240.1,72 256.2,136.7 198.9,194.4" fill="url(#rfg)" stroke="#d6cc9c" stroke-width=".8"/>
<polygon points="112.4,98.7 176.2,46.6 240.1,72 172.8,133.1" fill="#a3a19d" stroke="#e6cf7a" stroke-width=".8"/>
<polygon points="112.4,98.7 172.8,133.1 198.9,194.4 142.9,157.5" fill="#050505" stroke="#e6cf7a" stroke-width=".8"/>
<clipPath id="cf"><polygon points="112.4,98.7 172.8,133.1 198.9,194.4 142.9,157.5"/></clipPath><g clip-path="url(#cf)"><path d="M201.9 -64.8L-1299.7 142.1M195.2 -64.8L1734.4 142.7M205.3 -64.3L-1322.2 148.7M191.8 -64.3L1758 149.5M208.8 -63.9L-1345.7 155.6M188.3 -63.9L1782.8 156.6M212.3 -63.4L-1370.5 162.8M184.8 -63.4L1808.8 164.1M219.4 -62.5L-1423.7 178.5M177.7 -62.4L1865 180.3M223 -62L-1452.5 187M174.1 -61.9L1895.3 189M226.7 -61.5L-1482.9 195.9M170.4 -61.4L1927.4 198.2M230.4 -61L-1515 205.3M166.7 -60.9L1961.4 208M238 -60L-1584.9 225.9M159.1 -59.9L2035.5 229.3M241.8 -59.5L-1623.1 237.1M155.2 -59.3L2076 241M245.8 -59L-1663.7 249M151.3 -58.8L2119.2 253.4M249.7 -58.4L-1707 261.7M147.3 -58.3L2165.4 266.7M257.8 -57.4L-1802.7 289.9M139.2 -57.2L2267.6 296.1M262 -56.8L-1855.8 305.5M135.1 -56.6L2324.5 312.4M266.2 -56.2L-1913 322.3M130.9 -56L2385.8 330.1M270.4 -55.7L-1974.6 340.4M126.7 -55.5L2452 349.1M279.1 -54.5L-2113.6 381.2M118 -54.3L2602.1 392.3M283.5 -53.9L-2192.5 404.4M113.6 -53.7L2687.5 416.8M288 -53.3L-2278.7 429.7M109.1 -53.1L2781.1 443.8M292.6 -52.7L-2373.3 457.5M104.5 -52.4L2884.3 473.5M301.9 -51.5L-2593.4 522.2M95.2 -51.2L3125.7 542.9M306.7 -50.9L-2722.5 560.1M90.5 -50.5L3268.1 583.9M311.5 -50.2L-2867.2 602.7M85.6 -49.9L3428.6 630M316.4 -49.6L-3030.8 650.7M80.7 -49.2L3611.1 682.5M326.4 -48.2L-3431.1 768.4M70.7 -47.8L4062.2 812.3M331.6 -47.5L-3679.6 841.4M65.6 -47.2L4345.7 893.8M336.8 -46.8L-3971.7 927.2M60.4 -46.4L4682.3 990.6M342.1 -46.1L-4319.9 1029.5M55.2 -45.7L5088.4 1107.5M352.9 -44.7L-5264.7 1307.2M44.4 -44.3L6217.9 1432.3M358.4 -44L-5928.4 1502.2M38.8 -43.5L7036.2 1667.7M364.1 -43.2L-6799.2 1758.1M33.2 -42.7L8142.5 1985.9M369.8 -42.4L-7992 2108.6M27.5 -42L9721.4 2440.1M381.5 -40.9L-12476.6 3426.4M15.9 -40.4L16411.8 4364.5M387.5 -40.1L-17314 4851.4M9.9 -39.6L17483 4773.2M393.6 -39.3L-16863.4 4850.4M3.8 -38.7L17036.7 4774.2M399.8 -38.4L-16412.9 4849.3M-2.4 -37.9L16590.4 4775.2M412.6 -36.7L-15511.7 4847.3M-15 -36.2L15697.9 4777.2M419.1 -35.9L-15061.2 4846.3M-21.5 -35.3L15251.6 4778.2M425.8 -35L-14610.6 4845.3M-28.1 -34.4L14805.4 4779.2M432.5 -34.1L-14160.1 4844.3M-34.9 -33.5L14359.1 4780.2M446.4 -32.2L-13258.9 4842.3M-48.7 -31.6L13466.6 4782.2M453.5 -31.3L-12808.4 4841.2M-55.7 -30.6L13020.3 4783.2M460.8 -30.3L-12357.8 4840.2M-63 -29.7L12574 4784.2M468.2 -29.3L-11907.2 4839.2M-70.3 -28.7L12127.8 4785.2M483.4 -27.3L-11006.1 4837.2M-85.4 -26.6L11235.2 4787.2M491.2 -26.3L-10555.6 4836.2M-93.1 -25.5L10789 4788.2M499.2 -25.2L-10105 4835.2M-101 -24.5L10342.7 4789.2M507.3 -24.1L-9654.4 4834.2M-109.1 -23.4L9896.4 4790.2M524 -21.9L-8753.3 4832.1M-125.6 -21.1L9003.9 4792.2M532.6 -20.8L-8302.7 4831.1M-134.1 -20L8557.6 4793.2M541.4 -19.6L-7852.2 4830.1M-142.8 -18.8L8111.4 4794.2M550.3 -18.4L-7401.6 4829.1M-151.7 -17.6L7665.1 4795.2M568.8 -16L-6500.5 4827.1M-169.9 -15.1L6772.6 4797.2M578.3 -14.7L-6049.9 4826.1M-179.3 -13.8L6326.3 4798.2M588 -13.4L-5599.4 4825M-188.9 -12.5L5880 4799.2M597.9 -12.1L-5148.8 4824M-198.7 -11.2L5433.8 4800.2M618.4 -9.3L-4247.7 4822M-219 -8.4L4541.2 4802.2M629 -7.9L-3797.1 4821M-229.4 -7L4095 4803.3M639.8 -6.5L-3346.6 4820M-240.1 -5.5L3648.7 4804.3M650.9 -5L-2896 4819M-251 -4.1L3202.4 4805.3M673.7 -2L-1994.9 4816.9M-273.5 -1L2309.9 4807.3M685.6 -0.4L-1544.3 4815.9M-285.2 0.6L1863.6 4808.3M697.7 1.2L-1093.7 4814.9M-297.1 2.2L1417.4 4809.3M710.1 2.9L-643.2 4813.9M-309.3 3.9L971.1 4810.3M735.8 6.3L257.9 4811.9M-334.6 7.3L78.6 4812.3" stroke="#8a8a8a" stroke-opacity=".28" stroke-width=".7" fill="none"/><path d="M198.5 -65.2L-1278.3 135.8M198.5 -65.2L1711.9 136.2M215.8 -62.9L-1396.4 170.5M181.3 -62.9L1836.1 172M234.1 -60.5L-1548.9 215.3M162.9 -60.4L1997.3 218.3M253.7 -57.9L-1753.2 275.3M143.3 -57.7L2214.7 280.9M274.7 -55.1L-2041.3 360M122.4 -54.9L2523.9 369.8M297.2 -52.1L-2477.7 488.2M99.9 -51.8L2998.5 506.3M321.4 -48.9L-3217 705.5M75.8 -48.5L3820.1 742.6M347.4 -45.4L-4742.1 1153.6M49.8 -45L5588.1 1251.2M375.6 -41.7L-9725.8 2618.1M21.7 -41.2L12158 3140.9M406.2 -37.6L-15962.3 4848.3M-8.7 -37L16144.2 4776.2M439.4 -33.2L-13709.5 4843.3M-41.7 -32.5L13912.8 4781.2M475.7 -28.3L-11456.7 4838.2M-77.8 -27.6L11681.5 4786.2M515.6 -23L-9203.9 4833.1M-117.3 -22.3L9450.2 4791.2M559.5 -17.2L-6951.1 4828.1M-160.7 -16.3L7218.8 4796.2M608.1 -10.7L-4698.2 4823M-208.7 -9.8L4987.5 4801.2M662.2 -3.5L-2445.4 4817.9M-262.1 -2.5L2756.2 4806.3M722.8 4.5L-192.6 4812.9M-321.8 5.6L524.8 4811.3" stroke="#8a8a8a" stroke-opacity=".4" stroke-width="1" fill="none"/></g>
<circle cx="187.2" cy="118.5" r="67" fill="none" stroke="#8b62a3" stroke-width=".9"/>
<path d="M166.7 168.7L168 168.9L169.3 168.9L170.6 169L171.9 168.9L173.2 168.8L174.6 168.6L175.9 168.4L177.3 168.1L178.6 167.8L180 167.4L181.4 166.9L182.7 166.4L184.1 165.9L185.4 165.3L186.8 164.6M225 91.2L224.7 89.7L224.4 88.2L224.1 86.8L223.7 85.4L223.3 84L222.9 82.7L222.3 81.4L221.8 80.1L221.2 78.9L220.5 77.7L219.9 76.5L219.1 75.4L218.4 74.4L217.5 73.4L216.7 72.4" fill="none" stroke="#b45858" stroke-width="0.7" stroke-opacity="0.8"/>
<path d="M171.1 76.4L169.6 77.6L168.2 79L166.8 80.3L165.4 81.8L164 83.3L162.6 84.8L161.3 86.4L160 88.1L158.8 89.7L157.6 91.5L156.4 93.2L155.3 95L154.2 96.8L153.1 98.7L152.1 100.6L151.2 102.5L150.3 104.4L149.4 106.4L148.6 108.3L147.9 110.3L147.2 112.3L146.5 114.2L145.9 116.2L145.4 118.2L144.9 120.2L144.5 122.2L144.2 124.1L143.9 126.1L143.6 128L143.4 129.9L143.3 131.8L143.3 133.7L143.3 135.5L143.3 137.3L143.4 139.1L143.6 140.8L143.8 142.5L144.1 144.2L144.4 145.8L144.8 147.4L145.2 148.9L145.7 150.4L146.2 151.9L146.8 153.2L147.5 154.6L148.1 155.9L148.9 157.1L149.6 158.2L150.5 159.4L151.3 160.4L152.2 161.4L153.1 162.3L154.1 163.2L155.1 164L156.2 164.8L157.2 165.5L158.3 166.1L159.4 166.7L160.6 167.2L161.8 167.6L163 168L164.2 168.3L165.5 168.5L166.7 168.7L168 168.9M217.5 73.4L216.7 72.4L215.8 71.5L214.9 70.6L213.9 69.8L212.9 69.1L211.8 68.4L210.7 67.7L209.6 67.1L208.4 66.6L207.2 66.1L206 65.7L204.8 65.4L203.5 65.1L202.1 64.9L200.8 64.8L199.4 64.7L198 64.7L196.6 64.8L195.2 64.9L193.7 65.1L192.3 65.4L190.8 65.7L189.3 66.1L187.8 66.6L186.3 67.1L184.7 67.8L183.2 68.4L181.7 69.2L180.1 70L178.6 70.9L177.1 71.9L175.6 72.9L174.1 74L172.6 75.1L171.1 76.4" fill="none" stroke="#f0202a" stroke-width="0.95" stroke-opacity="1"/>
<path d="M236 94.2L235.1 93.2L234.2 92.2L233.2 91.3L232.2 90.4L231.1 89.6L230 88.8L228.8 88L227.6 87.3L226.4 86.6L225.1 86L223.7 85.4L222.4 84.8L221 84.3L219.5 83.8L218.1 83.4M140.5 113.4L139.8 114.7L139 116L138.3 117.3L137.7 118.6L137.1 120L136.6 121.3L136.2 122.7L135.8 124L135.4 125.4L135.2 126.7L134.9 128.1L134.8 129.4L134.7 130.7L134.6 132.1L134.7 133.4" fill="none" stroke="#62b062" stroke-width="0.7" stroke-opacity="0.8"/>
<path d="M147.5 154.6L148.8 155.4L150.1 156.1L151.5 156.8L153 157.5L154.5 158.1L156 158.7L157.6 159.2L159.3 159.6L161 160.1L162.7 160.4L164.5 160.7L166.3 161L168.2 161.2L170 161.3L171.9 161.4L173.9 161.4L175.8 161.4L177.8 161.3L179.8 161.2L181.8 161L183.8 160.8L185.8 160.4L187.9 160.1L189.9 159.7L191.9 159.2L194 158.7L196 158.1L198 157.4L200 156.7L202 156L203.9 155.2L205.9 154.4L207.8 153.5L209.7 152.6L211.5 151.6L213.3 150.6L215.1 149.5L216.9 148.4L218.6 147.3L220.2 146.1L221.8 144.9L223.4 143.7L224.9 142.4L226.3 141.1L227.7 139.8L229.1 138.4L230.3 137.1L231.6 135.7L232.7 134.3L233.8 132.9L234.8 131.4L235.8 130L236.7 128.5L237.5 127.1L238.3 125.6L238.9 124.1L239.6 122.7L240.1 121.2L240.6 119.8L241 118.3L241.3 116.9L241.6 115.4L241.8 114L241.9 112.6L242 111.2L242 109.8L241.9 108.5L241.8 107.1L241.5 105.8L241.3 104.5L240.9 103.3L240.5 102L240 100.8L239.5 99.6L238.9 98.5L238.3 97.4L237.6 96.3L236.8 95.2L236 94.2L235.1 93.2M134.6 132.1L134.7 133.4L134.8 134.7L134.9 136L135.2 137.3L135.4 138.5L135.8 139.8L136.2 141L136.7 142.2L137.2 143.4L137.8 144.6L138.5 145.7L139.3 146.8L140.1 147.9L140.9 149L141.9 150L142.9 151L143.9 151.9L145.1 152.9L146.2 153.7L147.5 154.6" fill="none" stroke="#18d818" stroke-width="0.95" stroke-opacity="1"/>
<path d="M148.8 79.4L148.6 80.2L148.4 81L148.2 81.9L148.2 82.8L148.1 83.8L148.1 84.8L148.2 85.8L148.3 86.8L148.4 87.9L148.6 89L148.9 90.2L149.1 91.3M210.5 158.8L211.6 159.2L212.7 159.5L213.8 159.8L214.9 160L215.9 160.2L216.9 160.4L217.8 160.5L218.8 160.5L219.7 160.5L220.6 160.5L221.4 160.3" fill="none" stroke="#6c6cc0" stroke-width="0.7" stroke-opacity="0.8"/>
<path d="M227.7 139.8L227.3 138.4L226.7 136.9L226.2 135.4L225.5 133.9L224.9 132.4L224.1 130.8L223.3 129.2L222.5 127.6L221.6 126L220.6 124.4L219.7 122.7L218.6 121L217.5 119.3L216.4 117.7L215.2 116L214 114.3L212.8 112.6L211.5 110.9L210.1 109.2L208.8 107.6L207.4 105.9L206 104.3L204.5 102.6L203.1 101L201.6 99.5L200.1 97.9L198.5 96.4L197 94.9L195.4 93.4L193.9 92L192.3 90.6L190.7 89.3L189.2 88L187.6 86.7L186 85.5L184.5 84.4L182.9 83.3L181.4 82.2L179.8 81.2L178.3 80.3L176.8 79.4L175.4 78.5L173.9 77.7L172.5 77L171.1 76.4L169.7 75.7L168.4 75.2L167.1 74.7L165.8 74.3L164.6 73.9L163.4 73.6L162.2 73.4L161.1 73.2L160 73.1L159 73L158 73L157.1 73.1L156.2 73.2L155.3 73.3L154.5 73.5L153.7 73.8L153 74.2L152.4 74.5L151.7 75L151.2 75.5L150.6 76L150.2 76.6L149.8 77.2L149.4 77.9L149.1 78.6L148.8 79.4L148.6 80.2M221.4 160.3L222.2 160.2L223 160L223.7 159.7L224.4 159.4L225.1 159.1L225.7 158.6L226.3 158.2L226.8 157.6L227.3 157.1L227.7 156.4L228.1 155.8L228.4 155L228.7 154.3L229 153.4L229.2 152.5L229.3 151.6L229.4 150.6L229.4 149.6L229.4 148.5L229.3 147.4L229.2 146.2L229 145L228.8 143.8L228.5 142.5L228.1 141.1L227.7 139.8" fill="none" stroke="#2a2af0" stroke-width="0.95" stroke-opacity="1"/>
<line x1="187.2" y1="118.5" x2="207.7" y2="129.2" stroke="#c8747c" stroke-width=".6" stroke-opacity=".8"/>
<polygon points="212.2,131.6 207,130.6 208.4,127.9" fill="#c8747c"/>
<line x1="187.2" y1="118.5" x2="179.1" y2="97.3" stroke="#4aa860" stroke-width=".6" stroke-opacity=".8"/>
<polygon points="177.3,92.6 180.5,96.8 177.7,97.8" fill="#4aa860"/>
<line x1="187.2" y1="118.5" x2="166.8" y2="137" stroke="#7a72d0" stroke-width=".6" stroke-opacity=".8"/>
<polygon points="162.4,141 165.8,135.9 167.9,138.1" fill="#7a72d0"/>
<circle cx="187.2" cy="118.5" r="1" fill="#9a98a8"/>
<path d="M225.7 145l4.5 1.2l-.3 -2.2" stroke="#e03030" stroke-width=".7" fill="none"/>
<circle cx="171.1" cy="76.4" r="2.3" fill="#f5101a"/>
<circle cx="227.7" cy="139.8" r="2.3" fill="#f5101a"/>
<circle cx="147.5" cy="154.6" r="2.3" fill="#f5101a"/>
<circle cx="223.7" cy="85.4" r="2" fill="#c98282"/>
<circle cx="152.2" cy="100.1" r="1.6" fill="#b08a8a"/>
<circle cx="201" cy="154.3" r="1.5" fill="#8fae8f"/>
</svg>
<div style="left:5.3px;top:102px;width:16.7px;height:273px;background:#3a3a3a;"></div>
<div style="left:5.3px;top:102.4px;width:16.7px;height:5px;background:#333;"></div>
<svg style="left:7px;top:103px;" width="4" height="4" viewBox="0 0 4 4"><path d="M3.5 0v4L.3 2z" fill="#0a0a0a"/></svg>
<div style="left:7.5px;top:110.7px;width:12px;height:12.6px;background:#8d9296;border-radius:1px"></div>
<svg style="left:8px;top:111.5px;" width="11" height="11" viewBox="0 0 11 11"><circle cx="7.2" cy="4" r="2.6" fill="#4a4a4a"/><path d="M1 9.5L4.5 2.5L8 9.5z" fill="#f0d020"/><path d="M8 8.5h2.5L9.2 10.5z" fill="#222"/></svg>
<div style="left:8px;top:124.6px;width:11px;height:10.6px;background:#505050;border-radius:1px"></div>
<svg style="left:8px;top:124.5px;" width="11" height="11" viewBox="0 0 11 11"><path d="M5.5 1.5l4 4-4 4-4-4z" fill="#6a6a6a"/><path d="M5.5 3.2l2.3 2.3-2.3 2.3-2.3-2.3z" fill="#f0d020"/><path d="M8.5 8.5H11L9.7 10.5z" fill="#999"/></svg>
<div style="left:8px;top:137.4px;width:11px;height:10.6px;background:#505050;border-radius:1px"></div>
<svg style="left:8px;top:137.5px;" width="11" height="11" viewBox="0 0 11 11"><path d="M2 3.5L6 2l3 2.5v4L5.5 10 2 7.5z" fill="#e8c818"/><path d="M8.5 8.5H11L9.7 10.5z" fill="#999"/></svg>
<svg style="left:9px;top:165px;" width="10" height="12" viewBox="0 0 10 12"><path d="M1.5 .8v8.4l2.2-1.8 1.5 3.4 1.5-.7-1.5-3.3 2.8-.2z" fill="#151515" stroke="#777" stroke-width=".5"/><path d="M8 9.5l1.6 1-1.6 1z" fill="#999"/></svg>
<div style="left:7.5px;top:178.7px;width:12px;height:12.6px;background:#9a9fa3;border-radius:1px"></div>
<svg style="left:9.5px;top:180px;" width="8" height="10" viewBox="0 0 8 10"><path d="M2 4.5V3a2 2 0 0 1 4 0v1.5" fill="none" stroke="#f4f4f4" stroke-width="1.1"/><rect x="1" y="4.5" width="6" height="4.5" rx=".6" fill="#f4f4f4"/></svg>
<svg style="left:8px;top:193.5px;" width="11" height="11" viewBox="0 0 11 11"><circle cx="5.5" cy="5" r="2.6" fill="url(#gs)"/><path d="M1.5 7a4.5 4.5 0 0 0 8 0" fill="none" stroke="#e03030" stroke-width="1.4"/><path d="M1 5.5l.6 2.2 1.8-1.2zM10 5.5l-.6 2.2-1.8-1.2z" fill="#e03030"/></svg>
<svg style="left:8px;top:207.5px;" width="11" height="11" viewBox="0 0 11 11"><circle cx="5.5" cy="5" r="2.6" fill="url(#gs)"/><path d="M2 9.5h7" stroke="#e03030" stroke-width="1.5"/><path d="M1 9.5l2-1.6v3.2zM10 9.5l-2-1.6v3.2z" fill="#e03030"/></svg>
<svg style="left:8px;top:221.5px;" width="11" height="11" viewBox="0 0 11 11"><circle cx="5.5" cy="5" r="2.6" fill="url(#gs)"/><path d="M5.5 .5v2M3.8 2l1.7-2 1.7 2z" stroke="#e03030" fill="#e03030" stroke-width=".8"/><path d="M2 9.5h7" stroke="#e03030" stroke-width="1.2"/></svg>
<svg style="left:8px;top:236.5px;" width="11" height="11" viewBox="0 0 11 11"><path d="M3 10L5.5 2 8 10M5.5 2v8" stroke="#d8d8d8" stroke-width=".8" fill="none"/><path d="M2 4l7 3M9 4L2 7" stroke="#e03030" stroke-width=".8"/><circle cx="5.5" cy="2" r="1" fill="#eee"/></svg>
<div style="left:7.5px;top:251.2px;width:12px;height:12.6px;background:#9a9fa3;border-radius:1px"></div>
<svg style="left:8px;top:252px;" width="11" height="11" viewBox="0 0 11 11"><path d="M5 7.5L5.5 1" stroke="#30c030" stroke-width="1.1"/><path d="M5 7.5L10 9" stroke="#e03030" stroke-width="1.1"/><path d="M5 7.5L1 10" stroke="#3050e0" stroke-width="1.1"/><path d="M4.3 2l1.2-1.6L6.5 2z" fill="#30c030"/></svg>
<svg style="left:8px;top:271.5px;" width="11" height="11" viewBox="0 0 11 11"><rect x="2.5" y="2.5" width="6" height="5.5" fill="none" stroke="#e8e8e8" stroke-width=".7" stroke-dasharray="1.2 .8"/><path d="M1.5 6V2.8a2.3 2.3 0 0 1 4.6 0V6" fill="none" stroke="#e03030" stroke-width="1.5"/><path d="M8.5 9h2.2L9.6 10.6z" fill="#999"/></svg>
<svg style="left:8px;top:285.5px;" width="11" height="11" viewBox="0 0 11 11"><path d="M2 7V4a2.3 2.3 0 0 1 4.6 0" fill="none" stroke="#e03030" stroke-width="1.5"/><path d="M3 9c2-3 4-3 6-5" stroke="#e8e8e8" stroke-width=".7" fill="none"/><path d="M8.5 9h2.2L9.6 10.6z" fill="#999"/></svg>
<svg style="left:8px;top:300px;" width="11" height="11" viewBox="0 0 11 11"><path d="M2 7V4a2.3 2.3 0 0 1 4.6 0" fill="none" stroke="#e03030" stroke-width="1.5"/><circle cx="6.5" cy="7" r="1.8" fill="#e8e8e8"/><path d="M8.5 9h2.2L9.6 10.6z" fill="#999"/></svg>
<svg style="left:8px;top:314.5px;" width="11" height="11" viewBox="0 0 11 11"><path d="M2.3 8V4.5a3 3 0 0 1 6 0V8" fill="none" stroke="#e03030" stroke-width="2"/><path d="M1.3 7h2v1.6h-2zM7.3 7h2v1.6h-2z" fill="#e8e8e8"/><path d="M8.5 9h2.2L9.6 10.6z" fill="#999"/></svg>
<svg style="left:10.5px;top:334.5px;" width="6" height="8" viewBox="0 0 6 8"><path d="M0 3L3 .3 6 3z" fill="#555"/><path d="M0 5L3 7.7 6 5z" fill="#888"/></svg>
<svg style="left:8px;top:348.5px;" width="11" height="11" viewBox="0 0 11 11"><path d="M2 3l6-1.5 1.5 3.5-6 2z" fill="#e8e8e8"/><path d="M3.5 7L9.5 5v1.5l-6 2z" fill="#999"/><path d="M3 3.5l4-1" stroke="#c03030" stroke-width=".8"/></svg>
<svg style="left:8px;top:361px;" width="11" height="11" viewBox="0 0 11 11"><ellipse cx="5.5" cy="5.5" rx="4.5" ry="3.2" fill="#a8a8a8"/><ellipse cx="5.5" cy="5.5" rx="2" ry="1.3" fill="#e8e8e8"/><path d="M2 4l7 3M9 4L2 7" stroke="#888" stroke-width=".5"/></svg>
<div style="left:416.5px;top:102px;width:12.5px;height:273px;background:#3a3a3a;"></div>
<div style="left:417.3px;top:117.8px;width:11.4px;height:12.4px;background:#8d9296;border-radius:1px"></div>
<svg style="left:418px;top:119px;" width="10" height="10" viewBox="0 0 10 10"><path d="M1 5.5l4-2 4 2-4 2z" fill="#e8ecee"/><path d="M1 5.5v1.5l4 2 4-2V5.5l-4 2z" fill="#a8b0b4"/><path d="M8 8.6h2L9 10z" fill="#999"/></svg>
<svg style="left:418px;top:132px;" width="10" height="10" viewBox="0 0 10 10"><rect x="1.5" y="2.5" width="6.5" height="5" fill="none" stroke="#6ab06a" stroke-width="1"/><path d="M3 6.5L6.5 3.5" stroke="#e8e8e8" stroke-width=".8"/><path d="M8 8.6h2L9 10z" fill="#999"/></svg>
<svg style="left:418px;top:145px;" width="10" height="10" viewBox="0 0 10 10"><path d="M3 4.5V3.2a2 2 0 0 1 4 0v1.3" fill="none" stroke="#f0f0f0" stroke-width="1"/><rect x="2" y="4.5" width="6" height="4.3" rx=".5" fill="#f0f0f0"/><path d="M8 8.6h2L9 10z" fill="#999"/></svg>
<svg style="left:418px;top:158px;" width="10" height="10" viewBox="0 0 10 10"><circle cx="5" cy="3.8" r="2.4" fill="none" stroke="#e8e8e8" stroke-width=".8"/><path d="M4 6.2h2v2.3H4z" fill="#c8c8c8"/><path d="M8 8.6h2L9 10z" fill="#999"/></svg>
<svg style="left:418px;top:171px;" width="10" height="10" viewBox="0 0 10 10"><circle cx="4.6" cy="4.8" r="3.3" fill="#e8ecee"/><circle cx="6" cy="5.8" r="2.6" fill="#b8c0c4"/><path d="M8 8.6h2L9 10z" fill="#999"/></svg>
<div style="left:417.3px;top:182.3px;width:11.4px;height:12.4px;background:#8d9296;border-radius:1px"></div>
<svg style="left:418px;top:183.5px;" width="10" height="10" viewBox="0 0 10 10"><circle cx="5" cy="4" r="2.6" fill="#f4f4e8"/><path d="M4 6.4h2v2.4H4z" fill="#d8d8d0"/><path d="M8 8.6h2L9 10z" fill="#999"/></svg>
<svg style="left:418px;top:196px;" width="10" height="10" viewBox="0 0 10 10"><circle cx="5" cy="3.8" r="2.3" fill="none" stroke="#e8e050" stroke-width=".9"/><path d="M4.2 6h1.6v2.4H4.2z" fill="#c8c8c8"/><path d="M8 8.6h2L9 10z" fill="#999"/></svg>
<svg style="left:418px;top:208.5px;" width="10" height="10" viewBox="0 0 10 10"><circle cx="5" cy="3.8" r="2.3" fill="none" stroke="#e8e050" stroke-width=".9"/><path d="M4.2 6h1.6v2.4H4.2z" fill="#c8c8c8"/><path d="M2 9h6" stroke="#e8e8e8" stroke-width=".6"/><path d="M8 8.6h2L9 10z" fill="#999"/></svg>
<div style="left:417.3px;top:220.3px;width:11.4px;height:12.4px;background:#8d9296;border-radius:1px"></div>
<svg style="left:418px;top:221.5px;" width="10" height="10" viewBox="0 0 10 10"><path d="M2 4h4.5v4H2z" fill="#2a2a2a"/><circle cx="3.3" cy="3" r="1.5" fill="#2a2a2a"/><circle cx="6" cy="3" r="1.3" fill="#2a2a2a"/><path d="M6.5 5.5l2-1v3l-2-1z" fill="#4a8ad0"/><circle cx="4.2" cy="6" r="1.1" fill="#e8e8e8"/><path d="M8 8.6h2L9 10z" fill="#999"/></svg>
<svg style="left:418px;top:235px;" width="10" height="10" viewBox="0 0 10 10"><path d="M1 2l7 5" stroke="#e8e8e8" stroke-width=".9"/><path d="M4 6.5l4 1.5-1-3.5z" fill="#c8c8c8"/><circle cx="2.5" cy="3" r="1.2" fill="#999"/><path d="M8 8.6h2L9 10z" fill="#999"/></svg>
<svg style="left:418px;top:248px;" width="10" height="10" viewBox="0 0 10 10"><path d="M2 5l3-1.5L8 5v3L5 9.5 2 8z" fill="#c8ccd0"/><circle cx="3" cy="2.5" r="1.4" fill="#e8e8e8"/><circle cx="6.5" cy="2.8" r="1.2" fill="#e8e8e8"/><path d="M8 8.6h2L9 10z" fill="#999"/></svg>
<svg style="left:421.8px;top:266.3px;" width="2.4" height="2.4" viewBox="0 0 2.4 2.4"><circle cx="1.2" cy="1.2" r="1.1" fill="#f0f0f0"/></svg>
<svg style="left:419px;top:276.5px;" width="8" height="8" viewBox="0 0 8 8"><path d="M2 6.5L6.5 1.5" stroke="#e8e8e8" stroke-width=".9"/><circle cx="2" cy="6.5" r="1.1" fill="#f0f0f0"/></svg>
<svg style="left:419px;top:289px;" width="8" height="8" viewBox="0 0 8 8"><path d="M2 6.5L6 2" stroke="#e8e8e8" stroke-width=".9"/><circle cx="6.2" cy="1.8" r="1.2" fill="#f0f0f0"/><circle cx="2" cy="6.5" r=".8" fill="#d0d0d0"/></svg>
<svg style="left:418px;top:301px;" width="11" height="10" viewBox="0 0 11 10"><circle cx="2.3" cy="7" r="1.1" fill="#f0f0f0"/><text x="3.6" y="6" font-size="5.2" font-weight="bold" fill="#f0f0f0" font-family="Liberation Sans,sans-serif">12</text></svg>
<svg style="left:419px;top:315px;" width="8" height="9" viewBox="0 0 8 9"><path d="M1 7.5h6.5v1H1z" fill="#c8c8c8"/><path d="M2 6.5l2-4 2.5 1.2v2.8z" fill="#f0f0f0"/></svg>
<svg style="left:419px;top:328px;" width="8" height="9" viewBox="0 0 8 9"><path d="M1 7.5h6.5v1H1z" fill="#c8c8c8"/><path d="M1.5 6.5l1.5-3.5 1.5 1 1-2 1.5 1.5v3z" fill="#f0f0f0"/></svg>
<svg style="left:419px;top:341px;" width="8" height="9" viewBox="0 0 8 9"><path d="M1.5 1v7h6" fill="none" stroke="#d8d8d8" stroke-width=".8"/><path d="M.5 1h2M7.5 7v2" stroke="#d8d8d8" stroke-width=".8"/></svg>
<svg style="left:418.5px;top:353.5px;" width="9" height="9.5" viewBox="0 0 9 9.5"><rect x="1.5" y="1.5" width="6" height="6" fill="none" stroke="#c8c8c8" stroke-width=".7"/><path d="M2.5 2.5l4 4M6.5 2.5l-4 4" stroke="#60b060" stroke-width="1"/><path d="M.5 .5h2M.5 .5v2M8.5 8.5h-2M8.5 8.5v-2" stroke="#e8e8e8" stroke-width=".7"/></svg>
<svg style="left:420.8px;top:366.5px;" width="4.4" height="3.4" viewBox="0 0 4.4 3.4"><path d="M0 0h4.4L2.2 3.4z" fill="#777"/></svg>
<svg style="left:340.3px;top:105px;" width="9.8" height="10.2" viewBox="0 0 9.8 10.2"><rect x=".4" y=".4" width="9" height="9.4" rx="4.2" fill="#586d7b" stroke="#b9c6ce" stroke-width=".7"/><path d="M3.6 4.8V3.9a1.3 1.3 0 0 1 2.6 0v.9" fill="none" stroke="#fff" stroke-width=".8"/><rect x="3" y="4.6" width="3.8" height="2.9" fill="#fff"/></svg>
<div style="left:352.6px;top:105.2px;width:25.9px;height:10px;background:#586d7b;border:0.7px solid #b9c6ce;border-radius:5px"></div>
<span class="t" style="left:356px;top:106.26px;font:7.4px/7.4px 'Liberation Sans',sans-serif;color:#fff;transform:scaleX(0.735);">Persp</span>
<svg style="left:372.3px;top:109.4px;" width="4" height="3" viewBox="0 0 4 3"><path d="M0 0h4L2 2.4z" fill="#fff"/></svg>
<div style="left:382.6px;top:105.2px;width:31px;height:10px;background:#586d7b;border:0.7px solid #b9c6ce;border-radius:5px"></div>
<span class="t" style="left:386.4px;top:106.26px;font:7.4px/7.4px 'Liberation Sans',sans-serif;color:#fff;transform:scaleX(0.730);">No cam</span>
<svg style="left:407.4px;top:109.4px;" width="4" height="3" viewBox="0 0 4 3"><path d="M0 0h4L2 2.4z" fill="#fff"/></svg>
<div style="left:435px;top:86.7px;width:205px;height:128.8px;background:#3a3a3a;"></div>
<svg style="left:437.5px;top:89.3px;" width="10" height="10" viewBox="0 0 10 10"><circle cx="3.2" cy="3.4" r="2.6" fill="#3a78d0"/><circle cx="7" cy="5.6" r="2.5" fill="#e03a30"/><path d="M2 9.2L4.6 4.4L7.2 9.2z" fill="#f0d020"/></svg>
<span class="t" style="left:449px;top:90.99px;font:bold 6.6px/6.6px 'Liberation Sans',sans-serif;color:#fff;transform:scaleX(0.828);">Geometry</span>
<div style="left:477px;top:89.2px;width:94.5px;height:9.6px;background:#1e1e1e;border-radius:1px"></div>
<span class="t" style="left:479px;top:91.23px;font:7.2px/7.2px 'Liberation Mono',monospace;color:#f0f0f0;transform:scaleX(0.842);">box_object1</span>
<svg style="left:574px;top:89.5px;" width="9.5" height="9.5" viewBox="0 0 9.5 9.5"><circle cx="4.75" cy="4.75" r="2.6" fill="none" stroke="#e8e8e8" stroke-width="1.5"/><path d="M4.75 .3v8.9M.3 4.75h8.9M1.6 1.6l6.3 6.3M7.9 1.6L1.6 7.9" stroke="#e8e8e8" stroke-width="1"/><circle cx="4.75" cy="4.75" r="1.3" fill="#3a3a3a"/><path d="M7 7.5h2.5L8.2 9.4z" fill="#aaa"/></svg>
<svg style="left:586.5px;top:89.5px;" width="10" height="10" viewBox="0 0 10 10"><path d="M2 1v8M8 1v8M2 5h6" stroke="#e8e8e8" stroke-width="1.6" fill="none"/><path d="M.8 1h2.4M.8 9h2.4M6.8 1h2.4M6.8 9h2.4" stroke="#5a9ae0" stroke-width="1"/></svg>
<svg style="left:598.5px;top:89.5px;" width="10" height="10" viewBox="0 0 10 10"><circle cx="4" cy="4" r="2.8" fill="none" stroke="#e8e8e8" stroke-width="1.1"/><path d="M6 6l3 3" stroke="#e8e8e8" stroke-width="1.5"/></svg>
<svg style="left:611px;top:89.8px;" width="9.5" height="9.5" viewBox="0 0 9.5 9.5"><circle cx="4.75" cy="4.75" r="3.9" fill="#3a3a3a" stroke="#cfcfcf" stroke-width=".9"/><text x="4.75" y="7" font-size="6.2" font-weight="bold" text-anchor="middle" fill="#e0e0e0" font-family="Liberation Serif,serif">i</text></svg>
<svg style="left:624px;top:89.8px;" width="9.5" height="9.5" viewBox="0 0 9.5 9.5"><circle cx="4.75" cy="4.75" r="3.9" fill="#3a3a3a" stroke="#cfcfcf" stroke-width=".9"/><text x="4.75" y="7" font-size="6.2" font-weight="bold" text-anchor="middle" fill="#e0e0e0" font-family="Liberation Sans,sans-serif">?</text></svg>
<div style="left:436px;top:102.4px;width:192.5px;height:11.6px;background:#2c2c2c;"></div>
<div style="left:436.5px;top:102.8px;width:33.5px;height:11.2px;background:#444;border-radius:1.5px 1.5px 0 0"></div>
<span class="t" style="left:439px;top:104.57px;font:bold 7px/7px 'Liberation Sans',sans-serif;color:#fff;transform:scaleX(0.833);">Transform</span>
<div style="left:471.3px;top:103.2px;width:25.5px;height:10.8px;background:#333;border:0.5px solid #484848;border-bottom:none;border-radius:1.5px 1.5px 0 0"></div>
<span class="t" style="left:475px;top:104.57px;font:7px/7px 'Liberation Sans',sans-serif;color:#c0c0c0;transform:scaleX(0.806);">Render</span>
<div style="left:498px;top:103.2px;width:18.5px;height:10.8px;background:#333;border:0.5px solid #484848;border-bottom:none;border-radius:1.5px 1.5px 0 0"></div>
<span class="t" style="left:501.5px;top:104.57px;font:7px/7px 'Liberation Sans',sans-serif;color:#c0c0c0;transform:scaleX(0.799);">Misc</span>
<div style="left:436px;top:114px;width:192.5px;height:101.5px;background:#3c3c3c;"></div>
<div style="left:628px;top:102.4px;width:6px;height:113px;background:#262626;"></div>
<div style="left:628.4px;top:103.6px;width:5.2px;height:36.4px;background:#484848;border-radius:1px"></div>
<div style="left:629.6px;top:116.5px;width:2.8px;height:4px;background:#333;"></div>
<div style="left:628.4px;top:192.5px;width:5.2px;height:10.3px;background:#333;border-radius:1px"></div>
<div style="left:628.4px;top:203.5px;width:5.2px;height:10.3px;background:#333;border-radius:1px"></div>
<svg style="left:629.2px;top:196px;" width="3.6" height="3" viewBox="0 0 3.6 3"><path d="M0 3h3.6L1.8 0z" fill="#777"/></svg>
<svg style="left:629.2px;top:207.5px;" width="3.6" height="3" viewBox="0 0 3.6 3"><path d="M0 0h3.6L1.8 3z" fill="#777"/></svg>
<div style="left:634.1px;top:102.4px;width:6px;height:113px;background:#3a3a3a;"></div>
<span class="t" style="left:459px;top:118.78px;font:6.8px/6.8px 'Liberation Sans',sans-serif;color:#c4c4c4;transform:scaleX(0.860);">Transform Order</span>
<span class="t" style="left:477.5px;top:132.08px;font:6.8px/6.8px 'Liberation Sans',sans-serif;color:#c4c4c4;transform:scaleX(0.872);">Translate</span>
<span class="t" style="left:484.5px;top:145.48px;font:6.8px/6.8px 'Liberation Sans',sans-serif;color:#c4c4c4;transform:scaleX(0.874);">Rotate</span>
<span class="t" style="left:488px;top:158.78px;font:6.8px/6.8px 'Liberation Sans',sans-serif;color:#c4c4c4;transform:scaleX(0.823);">Scale</span>
<span class="t" style="left:462.5px;top:172.18px;font:6.8px/6.8px 'Liberation Sans',sans-serif;color:#c4c4c4;transform:scaleX(0.878);">Pivot Translate</span>
<span class="t" style="left:470.5px;top:185.58px;font:6.8px/6.8px 'Liberation Sans',sans-serif;color:#c4c4c4;transform:scaleX(0.850);">Pivot Rotate</span>
<span class="t" style="left:466px;top:198.98px;font:6.8px/6.8px 'Liberation Sans',sans-serif;color:#c4c4c4;transform:scaleX(0.843);">Uniform Scale</span>
<div style="left:509.8px;top:116.6px;width:63.5px;height:10.4px;background:#4a4a4a;border-radius:1px"></div>
<span class="t" style="left:517.5px;top:118.17px;font:7px/7px 'Liberation Sans',sans-serif;color:#eee;transform:scaleX(0.791);">Scale Rot Trans</span>
<svg style="left:566.8px;top:118.2px;" width="4.4" height="7.6" viewBox="0 0 4.4 7.6"><path d="M.4 3L2.2 .5L4 3zM.4 4.6L2.2 7.1L4 4.6z" fill="#bdbdbd"/></svg>
<div style="left:576px;top:116.6px;width:45.4px;height:10.4px;background:#4a4a4a;border-radius:1px"></div>
<span class="t" style="left:583.8px;top:118.17px;font:7px/7px 'Liberation Sans',sans-serif;color:#eee;transform:scaleX(0.680);">Rx Ry Rz</span>
<svg style="left:615.3px;top:118.2px;" width="4.4" height="7.6" viewBox="0 0 4.4 7.6"><path d="M.4 3L2.2 .5L4 3zM.4 4.6L2.2 7.1L4 4.6z" fill="#bdbdbd"/></svg>
<div style="left:509.8px;top:130.7px;width:32.9px;height:10px;background:#0e0e0e;border-radius:1px;overflow:hidden"><span class="t" style="left:2.3px;top:1.57px;font:bold 7.2px/7.2px 'Liberation Sans',sans-serif;color:#fff;transform:scaleX(0.899)"><i style="display:inline-block;width:.556em;text-align:center;font-style:normal">-</i>0<i style="display:inline-block;width:.556em;text-align:center;font-style:normal">.</i>150843</span></div>
<div style="left:544.8px;top:130.7px;width:32.2px;height:10px;background:#0e0e0e;border-radius:1px;overflow:hidden"><span class="t" style="left:2.3px;top:1.57px;font:bold 7.2px/7.2px 'Liberation Sans',sans-serif;color:#fff;transform:scaleX(0.899)">0<i style="display:inline-block;width:.556em;text-align:center;font-style:normal">.</i>172088</span></div>
<div style="left:579.2px;top:130.7px;width:32.8px;height:10px;background:#0e0e0e;border-radius:1px;overflow:hidden"><span class="t" style="left:2.3px;top:1.57px;font:bold 7.2px/7.2px 'Liberation Sans',sans-serif;color:#fff;transform:scaleX(0.899)">0<i style="display:inline-block;width:.556em;text-align:center;font-style:normal">.</i>0103313</span></div>
<svg style="left:614px;top:131.5px;" width="8.5" height="8.5" viewBox="0 0 8.5 8.5"><circle cx="3.6" cy="4.4" r="1.9" fill="#6a96d8"/><path d="M5.2 5.6l1.6 1.8" stroke="#e0e0e0" stroke-width=".9"/><circle cx="3.3" cy="4" r=".8" fill="#dfe8f8"/></svg>
<div style="left:509.8px;top:143.7px;width:32.9px;height:10px;background:#0e0e0e;border-radius:1px;overflow:hidden"><span class="t" style="left:2.3px;top:1.57px;font:bold 7.2px/7.2px 'Liberation Sans',sans-serif;color:#fff;transform:scaleX(0.899)">21<i style="display:inline-block;width:.556em;text-align:center;font-style:normal">.</i>4117</span></div>
<div style="left:544.8px;top:143.7px;width:32.2px;height:10px;background:#0e0e0e;border-radius:1px;overflow:hidden"><span class="t" style="left:2.3px;top:1.57px;font:bold 7.2px/7.2px 'Liberation Sans',sans-serif;color:#fff;transform:scaleX(0.899)"><i style="display:inline-block;width:.556em;text-align:center;font-style:normal">-</i>1<i style="display:inline-block;width:.556em;text-align:center;font-style:normal">.</i>18897</span></div>
<div style="left:579.2px;top:143.7px;width:32.8px;height:10px;background:#0e0e0e;border-radius:1px;overflow:hidden"><span class="t" style="left:2.3px;top:1.57px;font:bold 7.2px/7.2px 'Liberation Sans',sans-serif;color:#fff;transform:scaleX(0.899)"><i style="display:inline-block;width:.556em;text-align:center;font-style:normal">-</i>1<i style="display:inline-block;width:.556em;text-align:center;font-style:normal">.</i>1173</span></div>
<svg style="left:614px;top:144.5px;" width="8.5" height="8.5" viewBox="0 0 8.5 8.5"><circle cx="3.6" cy="4.4" r="1.9" fill="#6a96d8"/><path d="M5.2 5.6l1.6 1.8" stroke="#e0e0e0" stroke-width=".9"/><circle cx="3.3" cy="4" r=".8" fill="#dfe8f8"/></svg>
<div style="left:509.8px;top:157px;width:32.9px;height:10px;background:#0e0e0e;border-radius:1px;overflow:hidden"><span class="t" style="left:2.3px;top:1.57px;font:7.2px/7.2px 'Liberation Sans',sans-serif;color:#e0e0e0;transform:scaleX(0.899)">1</span></div>
<div style="left:544.8px;top:157px;width:32.2px;height:10px;background:#0e0e0e;border-radius:1px;overflow:hidden"><span class="t" style="left:2.3px;top:1.57px;font:7.2px/7.2px 'Liberation Sans',sans-serif;color:#e0e0e0;transform:scaleX(0.899)">1</span></div>
<div style="left:579.2px;top:157px;width:32.8px;height:10px;background:#0e0e0e;border-radius:1px;overflow:hidden"><span class="t" style="left:2.3px;top:1.57px;font:7.2px/7.2px 'Liberation Sans',sans-serif;color:#e0e0e0;transform:scaleX(0.899)">1</span></div>
<svg style="left:614px;top:157.8px;" width="8.5" height="8.5" viewBox="0 0 8.5 8.5"><circle cx="3.6" cy="4.4" r="1.9" fill="#6a96d8"/><path d="M5.2 5.6l1.6 1.8" stroke="#e0e0e0" stroke-width=".9"/><circle cx="3.3" cy="4" r=".8" fill="#dfe8f8"/></svg>
<div style="left:509.8px;top:170.4px;width:32.9px;height:10px;background:#0e0e0e;border-radius:1px;overflow:hidden"><span class="t" style="left:2.3px;top:1.57px;font:7.2px/7.2px 'Liberation Sans',sans-serif;color:#e0e0e0;transform:scaleX(0.899)">0</span></div>
<div style="left:544.8px;top:170.4px;width:32.2px;height:10px;background:#0e0e0e;border-radius:1px;overflow:hidden"><span class="t" style="left:2.3px;top:1.57px;font:7.2px/7.2px 'Liberation Sans',sans-serif;color:#e0e0e0;transform:scaleX(0.899)">0</span></div>
<div style="left:579.2px;top:170.4px;width:32.8px;height:10px;background:#0e0e0e;border-radius:1px;overflow:hidden"><span class="t" style="left:2.3px;top:1.57px;font:7.2px/7.2px 'Liberation Sans',sans-serif;color:#e0e0e0;transform:scaleX(0.899)">0</span></div>
<svg style="left:614px;top:171.2px;" width="8.5" height="8.5" viewBox="0 0 8.5 8.5"><circle cx="3.6" cy="4.4" r="1.9" fill="#6a96d8"/><path d="M5.2 5.6l1.6 1.8" stroke="#e0e0e0" stroke-width=".9"/><circle cx="3.3" cy="4" r=".8" fill="#dfe8f8"/></svg>
<div style="left:509.8px;top:183.8px;width:32.9px;height:10px;background:#0e0e0e;border-radius:1px;overflow:hidden"><span class="t" style="left:2.3px;top:1.57px;font:7.2px/7.2px 'Liberation Sans',sans-serif;color:#e0e0e0;transform:scaleX(0.899)">0</span></div>
<div style="left:544.8px;top:183.8px;width:32.2px;height:10px;background:#0e0e0e;border-radius:1px;overflow:hidden"><span class="t" style="left:2.3px;top:1.57px;font:7.2px/7.2px 'Liberation Sans',sans-serif;color:#e0e0e0;transform:scaleX(0.899)">0</span></div>
<div style="left:579.2px;top:183.8px;width:32.8px;height:10px;background:#0e0e0e;border-radius:1px;overflow:hidden"><span class="t" style="left:2.3px;top:1.57px;font:7.2px/7.2px 'Liberation Sans',sans-serif;color:#e0e0e0;transform:scaleX(0.899)">0</span></div>
<svg style="left:614px;top:184.6px;" width="8.5" height="8.5" viewBox="0 0 8.5 8.5"><circle cx="3.6" cy="4.4" r="1.9" fill="#6a96d8"/><path d="M5.2 5.6l1.6 1.8" stroke="#e0e0e0" stroke-width=".9"/><circle cx="3.3" cy="4" r=".8" fill="#dfe8f8"/></svg>
<div style="left:509.8px;top:197.2px;width:35.2px;height:10px;background:#0e0e0e;border-radius:1px;overflow:hidden"><span class="t" style="left:2.3px;top:1.57px;font:7.2px/7.2px 'Liberation Sans',sans-serif;color:#e0e0e0;transform:scaleX(0.899)">1</span></div>
<div style="left:548.5px;top:201.7px;width:72.5px;height:1px;background:#4a86c8;"></div>
<div style="left:620.6px;top:197.2px;width:2.2px;height:10.4px;background:#c8c8c8;border-radius:1px"></div>
<div style="left:511.5px;top:212.3px;width:92px;height:4px;background:#4a4a4a;border-radius:1px 1px 0 0"></div>
<div style="left:511.5px;top:212.3px;width:92px;height:3.2px;overflow:hidden;background:none"><span class="t" style="left:19px;top:0.6px;font:6.3px/6.3px 'Liberation Sans',sans-serif;color:#ddd;transform:scaleX(.9)">Modify Pre-Transform</span></div>
<svg style="left:601.5px;top:213px;" width="3" height="2.5" viewBox="0 0 3 2.5"><path d="M0 0h3L1.5 2.4z" fill="#bbb"/></svg>
<div style="left:433px;top:215.5px;width:207px;height:3.6px;background:#222;"></div>
<div style="left:433px;top:219.8px;width:207px;height:10.4px;background:#262626;"></div>
<div style="left:435px;top:220px;width:26.6px;height:10.2px;background:#3e3e3e;border-radius:1.5px 1.5px 0 0"></div>
<span class="t" style="left:437.6px;top:222.36px;font:6.3px/6.3px 'Liberation Sans',sans-serif;color:#a8a8a8;transform:scaleX(0.975);">/obj</span>
<svg style="left:455.9px;top:223.9px;" width="2.2" height="2.2" viewBox="0 0 2.2 2.2"><rect width="2.2" height="2.2" rx=".5" fill="#d8d8d8"/></svg>
<div style="left:463.5px;top:220.3px;width:37.5px;height:9.9px;background:#313131;border-radius:1.5px 1.5px 0 0"></div>
<span class="t" style="left:466px;top:222.03px;font:6.9px/6.9px 'Liberation Sans',sans-serif;color:#dadada;transform:scaleX(0.704);">Tree View</span>
<svg style="left:495.7px;top:223.9px;" width="2.2" height="2.2" viewBox="0 0 2.2 2.2"><rect width="2.2" height="2.2" rx=".5" fill="#d8d8d8"/></svg>
<div style="left:502.5px;top:220.3px;width:51px;height:9.9px;background:#313131;border-radius:1.5px 1.5px 0 0"></div>
<span class="t" style="left:505.5px;top:222.03px;font:6.9px/6.9px 'Liberation Sans',sans-serif;color:#dadada;transform:scaleX(0.751);">Material Palette</span>
<svg style="left:547.9px;top:223.9px;" width="2.2" height="2.2" viewBox="0 0 2.2 2.2"><rect width="2.2" height="2.2" rx=".5" fill="#d8d8d8"/></svg>
<div style="left:555px;top:220.3px;width:47.5px;height:9.9px;background:#313131;border-radius:1.5px 1.5px 0 0"></div>
<span class="t" style="left:557px;top:222.03px;font:6.9px/6.9px 'Liberation Sans',sans-serif;color:#dadada;transform:scaleX(0.735);">Asset Browser</span>
<svg style="left:596.7px;top:223.9px;" width="2.2" height="2.2" viewBox="0 0 2.2 2.2"><rect width="2.2" height="2.2" rx=".5" fill="#d8d8d8"/></svg>
<span class="t" style="left:606.63px;top:220.21px;font:bold 9.5px/9.5px 'Liberation Sans',sans-serif;color:#f0f0f0;">+</span>
<svg style="left:618.5px;top:222.2px;" width="7" height="6" viewBox="0 0 7 6"><rect x=".4" y=".4" width="6.2" height="5" fill="#d8d8d8" stroke="#888" stroke-width=".5"/><rect x=".4" y=".4" width="6.2" height="1.6" fill="#555"/></svg>
<svg style="left:629px;top:224.1px;" width="4" height="3" viewBox="0 0 4 3"><path d="M0 0h4L2 3z" fill="#ddd"/></svg>
<div style="left:433px;top:230px;width:207px;height:15.2px;background:#3a3a3a;"></div>
<svg style="left:438.5px;top:234.6px;" width="7" height="6" viewBox="0 0 7 6"><path d="M0 3L3.5 0v2h3.5v2H3.5v2z" fill="#5c5c5c"/></svg>
<svg style="left:450.5px;top:234.6px;" width="7" height="6" viewBox="0 0 7 6"><path d="M7 3L3.5 0v2H0v2h3.5v2z" fill="#5c5c5c"/></svg>
<div style="left:463px;top:231.8px;width:143.6px;height:11.4px;background:#2b2b2b;border:0.6px solid #4d4d4d;border-radius:1.5px"></div>
<svg style="left:466.5px;top:233.6px;" width="8.5" height="8" viewBox="0 0 8.5 8"><path d="M.8 .8h2.6l.6 1H7.2v5.6H.8z" fill="#6d747b"/><path d="M.8 4.2h6.4v3.2H.8z" fill="#8c9aa5"/><path d="M1.5 5.2h5M1.5 6.3h5" stroke="#6a7680" stroke-width=".5"/></svg>
<span class="t" style="left:477.2px;top:234.07px;font:7px/7px 'Liberation Sans',sans-serif;color:#dcdcdc;transform:scaleX(0.856);">obj</span>
<div style="left:598.4px;top:232.5px;width:7.5px;height:10px;background:#373737;border-radius:1px"></div>
<svg style="left:600.1px;top:236.3px;" width="4" height="3" viewBox="0 0 4 3"><path d="M0 0h4L2 3z" fill="#aaa"/></svg>
<svg style="left:612.5px;top:233.6px;" width="8" height="8" viewBox="0 0 8 8"><path d="M.6 4h2.8M3.4 1.8v4.4M3.4 2.6h2.4l1.4-1v4.8l-1.4-1H3.4z" fill="#cfcfcf" stroke="#cfcfcf" stroke-width=".6"/></svg>
<svg style="left:624px;top:233.1px;" width="9" height="9" viewBox="0 0 9 9"><circle cx="4.5" cy="4.5" r="3.8" fill="#1f2b45" stroke="#4272c8" stroke-width="1"/><circle cx="4.5" cy="4.5" r=".9" fill="#4272c8"/><path d="M4.5 4.5L6.3 2.7" stroke="#4272c8" stroke-width=".7"/></svg>
<div style="left:433px;top:245.2px;width:207px;height:1.2px;background:#222;"></div>
<div style="left:433px;top:246.4px;width:207px;height:13px;background:#3a3a3a;"></div>
<div style="left:435.4px;top:247px;width:3.8px;height:11.6px;background:#2d2d2d;"></div>
<svg style="left:435.8px;top:248px;" width="3" height="3.5" viewBox="0 0 3 3.5"><path d="M0 3L1.5 .3L3 3z" fill="#0a0a0a"/></svg>
<span class="t" style="left:452.7px;top:249.17px;font:7px/7px 'Liberation Sans',sans-serif;color:#d6d6d6;transform:scaleX(0.907);">Add</span>
<span class="t" style="left:471.8px;top:249.17px;font:7px/7px 'Liberation Sans',sans-serif;color:#d6d6d6;transform:scaleX(0.904);">Edit</span>
<span class="t" style="left:490.4px;top:249.17px;font:7px/7px 'Liberation Sans',sans-serif;color:#d6d6d6;transform:scaleX(0.814);">Go</span>
<span class="t" style="left:505.6px;top:249.17px;font:7px/7px 'Liberation Sans',sans-serif;color:#d6d6d6;transform:scaleX(0.891);">View</span>
<span class="t" style="left:526px;top:249.17px;font:7px/7px 'Liberation Sans',sans-serif;color:#d6d6d6;transform:scaleX(0.949);">Tools</span>
<span class="t" style="left:549px;top:249.17px;font:7px/7px 'Liberation Sans',sans-serif;color:#d6d6d6;transform:scaleX(0.904);">Layout</span>
<span class="t" style="left:575px;top:249.17px;font:7px/7px 'Liberation Sans',sans-serif;color:#d6d6d6;transform:scaleX(0.972);">Help</span>
<svg style="left:614.5px;top:248.2px;" width="10" height="10" viewBox="0 0 10 10"><path d="M1.5 8.5L6 4" stroke="#e8e8e8" stroke-width="1.6"/><path d="M5.2 1.2a2.4 2.4 0 0 1 3.4 3.4l-1.2-.4-.9-.9z" fill="#e8e8e8"/><path d="M8.5 8.5L3 3M3 3L1.5 1.2" stroke="#e8e8e8" stroke-width="1"/></svg>
<svg style="left:629px;top:250px;" width="4.5" height="6" viewBox="0 0 4.5 6"><path d="M0 0v6l4.5-3z" fill="#888"/></svg>
<div style="left:433px;top:259.4px;width:207px;height:113.6px;background:#2c2c2c;"></div>
<span class="t" style="left:585.5px;top:268.82px;font:bold 12.4px/12.4px 'Liberation Sans',sans-serif;color:#565656;transform:scaleX(0.978);">Objects</span>
<svg style="left:531.4px;top:303px;" width="38" height="20" viewBox="0 0 38 20"><path d="M18.6 1.2h1.5v2.8h-1.5zM18.6 16h1.5v2.6h-1.5z" fill="#bdbdbd"/>
<rect x="2.4" y="3.9" width="33.6" height="12.2" rx="2.6" fill="#d2d2d2" stroke="#d9aa0a" stroke-width="1.6"/>
<rect x="3.6" y="5.1" width="3.6" height="9.8" rx=".6" fill="#7ccc2a"/>
<rect x="31.2" y="5.1" width="3.6" height="9.8" rx=".6" fill="#2a8af0"/>
<circle cx="17.9" cy="8.8" r="1.8" fill="#3a78d0"/><circle cx="20.7" cy="10.2" r="1.8" fill="#e03a30"/><path d="M16.9 12.7l2-3.6 2 3.6z" fill="#f0d020"/></svg>
<span class="t" style="left:570px;top:302.14px;font:5.6px/5.6px 'Liberation Sans',sans-serif;color:#5e5e5e;transform:scaleX(1.017);">Geometry</span>
<span class="t" style="left:570.3px;top:309.38px;font:6.8px/6.8px 'Liberation Sans',sans-serif;color:#e0e0e0;transform:scaleX(0.984);">box_object1</span>
<div style="left:1.3px;top:375px;width:430px;height:2.1px;background:#1e1e1e;"></div>
<div style="left:431px;top:373.3px;width:209px;height:3.8px;background:#1e1e1e;"></div>
<div style="left:5.3px;top:377px;width:634.7px;height:35.6px;background:#3a3a3a;"></div>
<div style="left:8.1px;top:379.8px;width:13.8px;height:14.2px;background:#4a4a4a;border-radius:1px;border:0.5px solid #3a3a3a"></div>
<svg style="left:10px;top:381.9px;" width="10" height="10" viewBox="0 0 10 10"><path d="M1.5 2v6" stroke="#e8e8e8" stroke-width="1.1"/><path d="M5.5 2v6L2.2 5zM9 2v6L5.7 5z" fill="#e8e8e8"/></svg>
<div style="left:21.9px;top:379.8px;width:13.8px;height:14.2px;background:#4a4a4a;border-radius:1px;border:0.5px solid #3a3a3a"></div>
<svg style="left:23.8px;top:381.9px;" width="10" height="10" viewBox="0 0 10 10"><path d="M7.3 1.8v6.4L2.5 5z" fill="#e8e8e8"/></svg>
<div style="left:35.7px;top:379.8px;width:13.8px;height:14.2px;background:#99a5ad;border-radius:1px;border:0.5px solid #c8d0d6"></div>
<svg style="left:37.6px;top:381.9px;" width="10" height="10" viewBox="0 0 10 10"><rect x="2.2" y="2.2" width="5.6" height="5.6" fill="#d8dde0" stroke="#f8f8f8" stroke-width=".8"/></svg>
<div style="left:49.6px;top:379.8px;width:13.8px;height:14.2px;background:#4a4a4a;border-radius:1px;border:0.5px solid #3a3a3a"></div>
<svg style="left:51.5px;top:381.9px;" width="10" height="10" viewBox="0 0 10 10"><path d="M2.7 1.8v6.4L7.5 5z" fill="#e8e8e8"/></svg>
<div style="left:63.4px;top:379.8px;width:13.8px;height:14.2px;background:#4a4a4a;border-radius:1px;border:0.5px solid #3a3a3a"></div>
<svg style="left:65.3px;top:381.9px;" width="10" height="10" viewBox="0 0 10 10"><path d="M8.5 2v6" stroke="#e8e8e8" stroke-width="1.1"/><path d="M4.5 2v6l3.3-3zM1 2v6l3.3-3z" fill="#e8e8e8"/></svg>
<div style="left:79.8px;top:380.2px;width:23.2px;height:12.8px;background:#0e0e0e;border-radius:1px"></div>
<span class="t" style="left:82px;top:383.32px;font:6.9px/6.9px 'Liberation Sans',sans-serif;color:#e0e0e0;transform:scaleX(0.847);">1</span>
<div style="left:105px;top:379.8px;width:6.2px;height:14px;background:#4a4a4a;border-radius:1px"></div>
<svg style="left:104.1px;top:381.8px;" width="8" height="10" viewBox="0 0 8 10"><path d="M1 3.5h1.2v3H1zM5 2v6L2.5 5z" fill="#ddd"/></svg>
<div style="left:111.9px;top:379.8px;width:6.2px;height:14px;background:#4a4a4a;border-radius:1px"></div>
<svg style="left:111px;top:381.8px;" width="8" height="10" viewBox="0 0 8 10"><path d="M5.8 3.5H7v3H5.8zM3 2v6l2.5-3z" fill="#ddd"/></svg>
<svg style="left:120.5px;top:376px;" width="392" height="19" viewBox="0 0 392 19"><path d="M0 12.2H390" stroke="#8a8a8a" stroke-width=".7"/><path d="M-0.1 9.0V14.4M3.2 10.6V12.2M6.4 10.6V12.2M9.7 10.2V13.2M13.0 10.6V12.2M16.2 10.6V12.2M19.5 9.8V13.6M22.8 10.6V12.2M26.0 10.6V12.2M29.3 10.2V13.2M32.6 10.6V12.2M35.8 10.6V12.2M39.1 9.0V14.4M42.4 10.6V12.2M45.6 10.6V12.2M48.9 10.2V13.2M52.2 10.6V12.2M55.4 10.6V12.2M58.7 9.8V13.6M62.0 10.6V12.2M65.2 10.6V12.2M68.5 10.2V13.2M71.8 10.6V12.2M75.0 10.6V12.2M78.3 9.0V14.4M81.6 10.6V12.2M84.8 10.6V12.2M88.1 10.2V13.2M91.3 10.6V12.2M94.6 10.6V12.2M97.9 9.8V13.6M101.1 10.6V12.2M104.4 10.6V12.2M107.7 10.2V13.2M110.9 10.6V12.2M114.2 10.6V12.2M117.5 9.0V14.4M120.7 10.6V12.2M124.0 10.6V12.2M127.3 10.2V13.2M130.5 10.6V12.2M133.8 10.6V12.2M137.1 9.8V13.6M140.3 10.6V12.2M143.6 10.6V12.2M146.9 10.2V13.2M150.1 10.6V12.2M153.4 10.6V12.2M156.7 9.0V14.4M159.9 10.6V12.2M163.2 10.6V12.2M166.5 10.2V13.2M169.7 10.6V12.2M173.0 10.6V12.2M176.3 9.8V13.6M179.5 10.6V12.2M182.8 10.6V12.2M186.1 10.2V13.2M189.3 10.6V12.2M192.6 10.6V12.2M195.9 9.0V14.4M199.1 10.6V12.2M202.4 10.6V12.2M205.7 10.2V13.2M208.9 10.6V12.2M212.2 10.6V12.2M215.5 9.8V13.6M218.7 10.6V12.2M222.0 10.6V12.2M225.3 10.2V13.2M228.5 10.6V12.2M231.8 10.6V12.2M235.1 9.0V14.4M238.3 10.6V12.2M241.6 10.6V12.2M244.9 10.2V13.2M248.1 10.6V12.2M251.4 10.6V12.2M254.6 9.8V13.6M257.9 10.6V12.2M261.2 10.6V12.2M264.4 10.2V13.2M267.7 10.6V12.2M271.0 10.6V12.2M274.2 9.0V14.4M277.5 10.6V12.2M280.8 10.6V12.2M284.0 10.2V13.2M287.3 10.6V12.2M290.6 10.6V12.2M293.8 9.8V13.6M297.1 10.6V12.2M300.4 10.6V12.2M303.6 10.2V13.2M306.9 10.6V12.2M310.2 10.6V12.2M313.4 9.0V14.4M316.7 10.6V12.2M320.0 10.6V12.2M323.2 10.2V13.2M326.5 10.6V12.2M329.8 10.6V12.2M333.0 9.8V13.6M336.3 10.6V12.2M339.6 10.6V12.2M342.8 10.2V13.2M346.1 10.6V12.2M349.4 10.6V12.2M352.6 9.0V14.4M355.9 10.6V12.2M359.2 10.6V12.2M362.4 10.2V13.2M365.7 10.6V12.2M369.0 10.6V12.2M372.2 9.8V13.6M375.5 10.6V12.2M378.8 10.6V12.2M382.0 10.2V13.2M385.3 10.6V12.2M388.6 10.6V12.2M391.8 9.0V14.4" stroke="#a0a0a0" stroke-width=".6" fill="none"/></svg>
<span class="t" style="left:158.44px;top:376.24px;font:5.6px/5.6px 'Liberation Sans',sans-serif;color:#909090;transform:scaleX(0.850);">24</span>
<span class="t" style="left:197.64px;top:376.24px;font:5.6px/5.6px 'Liberation Sans',sans-serif;color:#909090;transform:scaleX(0.850);">48</span>
<span class="t" style="left:236.83px;top:376.24px;font:5.6px/5.6px 'Liberation Sans',sans-serif;color:#909090;transform:scaleX(0.850);">72</span>
<span class="t" style="left:276.02px;top:376.24px;font:5.6px/5.6px 'Liberation Sans',sans-serif;color:#909090;transform:scaleX(0.850);">96</span>
<span class="t" style="left:313.89px;top:376.24px;font:5.6px/5.6px 'Liberation Sans',sans-serif;color:#909090;transform:scaleX(0.850);">120</span>
<span class="t" style="left:353.08px;top:376.24px;font:5.6px/5.6px 'Liberation Sans',sans-serif;color:#909090;transform:scaleX(0.850);">144</span>
<span class="t" style="left:392.27px;top:376.24px;font:5.6px/5.6px 'Liberation Sans',sans-serif;color:#909090;transform:scaleX(0.850);">168</span>
<span class="t" style="left:431.47px;top:376.24px;font:5.6px/5.6px 'Liberation Sans',sans-serif;color:#909090;transform:scaleX(0.850);">192</span>
<span class="t" style="left:470.66px;top:376.24px;font:5.6px/5.6px 'Liberation Sans',sans-serif;color:#909090;transform:scaleX(0.850);">216</span>
<div style="left:121.6px;top:376.8px;width:13.4px;height:9.8px;background:#111;border:0.8px solid #e8e8e8;border-radius:1px"></div>
<span class="t" style="left:125.3px;top:378.42px;font:bold 6.9px/6.9px 'Liberation Sans',sans-serif;color:#fff;transform:scaleX(0.834);">1</span>
<svg style="left:120.5px;top:385.5px;" width="6" height="5" viewBox="0 0 6 5"><path d="M2 0L0 4.5" stroke="#e8e8e8" stroke-width=".7"/></svg>
<div style="left:8.8px;top:397.5px;width:12.4px;height:12.2px;background:#2c2c2c;border-radius:1.5px;border:0.6px solid #6c6c6c"></div>
<svg style="left:10px;top:399px;" width="10" height="10" viewBox="0 0 10 10"><rect x="2" y="1.5" width="5" height="6" fill="#e8e8e8"/><path d="M5 4.5v4.5l1.3-1 1 1.8.9-.5-1-1.7 1.6-.2z" fill="#111" stroke="#eee" stroke-width=".3"/></svg>
<div style="left:22.5px;top:397.5px;width:12.4px;height:12.2px;background:#2c2c2c;border-radius:1.5px;border:0.6px solid #6c6c6c"></div>
<svg style="left:23.7px;top:399px;" width="10" height="10" viewBox="0 0 10 10"><path d="M1.5 4h1.7L5.5 2v6L3.2 6H1.5z" fill="#e8e8e8"/><path d="M6.7 3a3 3 0 0 1 0 4M7.8 2a4.5 4.5 0 0 1 0 6" stroke="#e8e8e8" stroke-width=".6" fill="none"/></svg>
<div style="left:36.3px;top:397.5px;width:12.4px;height:12.2px;background:#2c2c2c;border-radius:1.5px;border:0.6px solid #6c6c6c"></div>
<svg style="left:37.5px;top:399px;" width="10" height="10" viewBox="0 0 10 10"><path d="M2 7.5h5a2 2 0 0 0 0-4H3" fill="none" stroke="#e8e8e8" stroke-width="1"/><path d="M4 1.8L2 3.5 4 5.2z" fill="#e8e8e8"/></svg>
<div style="left:50.3px;top:397.5px;width:12.4px;height:12.2px;background:#2c2c2c;border-radius:1.5px;border:0.6px solid #6c6c6c"></div>
<svg style="left:51.5px;top:399px;" width="10" height="10" viewBox="0 0 10 10"><circle cx="5" cy="5" r="3.4" fill="none" stroke="#e8e8e8" stroke-width=".9"/><path d="M6.3 3.9a1.7 1.7 0 1 0 0 2.2" fill="none" stroke="#e8e8e8" stroke-width=".9"/></svg>
<div style="left:67px;top:397.5px;width:10.2px;height:12.2px;background:#343434;border-radius:1px"></div>
<div style="left:78.9px;top:397.5px;width:10.2px;height:12.2px;background:#343434;border-radius:1px"></div>
<svg style="left:68px;top:400.5px;" width="8" height="7" viewBox="0 0 8 7"><path d="M1.5 1.5v4" stroke="#565656" stroke-width=".8"/><path d="M6 1.5v4L2.8 3.5z" fill="#565656"/></svg>
<svg style="left:80px;top:400.5px;" width="8" height="7" viewBox="0 0 8 7"><path d="M6.5 1.5v4" stroke="#565656" stroke-width=".8"/><path d="M2 1.5v4l3.2-2z" fill="#565656"/></svg>
<div style="left:121px;top:399.5px;width:22.7px;height:9.6px;background:#282828;border-radius:1px"></div>
<span class="t" style="left:123.2px;top:401.02px;font:6.9px/6.9px 'Liberation Sans',sans-serif;color:#e0e0e0;transform:scaleX(0.847);">1</span>
<div style="left:145px;top:399.5px;width:22.8px;height:9.6px;background:#0e0e0e;border-radius:1px"></div>
<span class="t" style="left:147.2px;top:401.02px;font:6.9px/6.9px 'Liberation Sans',sans-serif;color:#e0e0e0;transform:scaleX(0.847);">1</span>
<div style="left:464.7px;top:399.5px;width:20.6px;height:9.6px;background:#0e0e0e;border-radius:1px"></div>
<span class="t" style="left:466.9px;top:401.02px;font:bold 6.9px/6.9px 'Liberation Sans',sans-serif;color:#fff;transform:scaleX(0.847);">240</span>
<div style="left:487.7px;top:399.5px;width:21px;height:9.6px;background:#282828;border-radius:1px"></div>
<span class="t" style="left:489.9px;top:401.02px;font:bold 6.9px/6.9px 'Liberation Sans',sans-serif;color:#fff;transform:scaleX(0.847);">240</span>
<div style="left:169px;top:403.4px;width:292px;height:1.2px;background:#8a8a8a;"></div>
<svg style="left:167.5px;top:401px;" width="4" height="6" viewBox="0 0 4 6"><path d="M0 0l3.6 3L0 6z" fill="#e0e0e0"/></svg>
<svg style="left:459px;top:401px;" width="4" height="6" viewBox="0 0 4 6"><path d="M4 0L.4 3 4 6z" fill="#e0e0e0"/></svg>
<svg style="left:510.5px;top:382.2px;" width="23" height="23" viewBox="0 0 23 23"><circle cx="11.5" cy="11.5" r="10" fill="#2e2e2e" stroke="#6a6a6a" stroke-width=".8"/><circle cx="13.3" cy="9.7" r="2.2" fill="none" stroke="#f4f4f4" stroke-width="1.3"/><path d="M11.7 11.3L7.3 15.7M8.4 14.6l1.4 1.4M9.8 13.2l1 1" stroke="#f4f4f4" stroke-width="1.2"/></svg>
<div style="left:531px;top:389px;width:7.6px;height:8px;background:#444;border-radius:1px"></div>
<svg style="left:532.6px;top:391.6px;" width="4.4" height="3.4" viewBox="0 0 4.4 3.4"><path d="M0 0h4.4L2.2 3.2z" fill="#aaa"/></svg>
<div style="left:542.7px;top:380.6px;width:10.7px;height:10px;background:#2a2a2a;border:0.6px solid #777;border-radius:1px"></div>
<svg style="left:543.3px;top:381px;" width="9.5" height="9.5" viewBox="0 0 9.5 9.5"><path d="M1 2h3M1 4.5h3M1 7h3" stroke="#e8e8e8" stroke-width=".8"/><path d="M5.5 2.5l2.5 2-2.5 2" stroke="#5ab0e8" stroke-width=".9" fill="none"/></svg>
<div style="left:542.7px;top:396px;width:10.7px;height:10.4px;background:#2a2a2a;border:0.6px solid #777;border-radius:1px"></div>
<svg style="left:543.3px;top:396.5px;" width="9.5" height="9.5" viewBox="0 0 9.5 9.5"><rect x="1" y="1.5" width="7.5" height="6" fill="#111" stroke="#aaa" stroke-width=".5"/><path d="M1.5 5.5c1.5-3 2.5-3 3.5 0s2 1 3-1" stroke="#e8c040" stroke-width=".7" fill="none"/></svg>
<div style="left:558px;top:380.6px;width:78px;height:11.4px;background:#4a4a4a;border-radius:1px"></div>
<span class="t" style="left:567px;top:382.63px;font:6.9px/6.9px 'Liberation Sans',sans-serif;color:#dcdcdc;transform:scaleX(0.795);">0 keys, 9/9 channels</span>
<svg style="left:629px;top:384.5px;" width="4.6" height="3.4" viewBox="0 0 4.6 3.4"><path d="M0 3.4h4.6L2.3 0z" fill="#bbb"/></svg>
<div style="left:557px;top:395.4px;width:68px;height:11.6px;background:#4a4a4a;border-radius:1px"></div>
<span class="t" style="left:564.4px;top:397.53px;font:6.9px/6.9px 'Liberation Sans',sans-serif;color:#dcdcdc;transform:scaleX(0.790);">Key All Channels</span>
<div style="left:625.7px;top:395.4px;width:9.6px;height:11.6px;background:#464646;border-radius:1px"></div>
<svg style="left:628.3px;top:397.5px;" width="4.4" height="7.6" viewBox="0 0 4.4 7.6"><path d="M.4 3L2.2 .5L4 3zM.4 4.6L2.2 7.1L4 4.6z" fill="#bdbdbd"/></svg>
<div style="left:636.2px;top:58.2px;width:2.6px;height:354.4px;background:#1a222e;"></div>
<div style="left:1.3px;top:412.6px;width:638px;height:1px;background:#222;"></div>
<div style="left:1.4px;top:413.6px;width:637.2px;height:11.6px;background:#3a3a3a;"></div>
<svg style="left:552.5px;top:414.5px;" width="10" height="9.5" viewBox="0 0 10 9.5"><ellipse cx="4.5" cy="4" rx="4" ry="3" fill="#d8d8d8"/><path d="M5 6.5l3 2.5-.6-3z" fill="#d8d8d8"/><circle cx="8.2" cy="7.3" r="1.3" fill="#999"/></svg>
<svg style="left:565.5px;top:415px;" width="9" height="9" viewBox="0 0 9 9"><path d="M7.3 4.5a2.8 2.8 0 1 1-1-2.1" fill="none" stroke="#6a6a6a" stroke-width="1"/><path d="M5.3 1.3l1.6 1.2-1.8 1z" fill="#6a6a6a"/></svg>
<div style="left:578.4px;top:413.6px;width:47.5px;height:10.6px;background:#4a4a4a;border-radius:1px"></div>
<span class="t" style="left:586.7px;top:415.03px;font:6.9px/6.9px 'Liberation Sans',sans-serif;color:#dcdcdc;transform:scaleX(0.834);">Auto Update</span>
<div style="left:627.3px;top:413.6px;width:8px;height:10.6px;background:#464646;border-radius:1px"></div>
<svg style="left:629.1px;top:415.1px;" width="4.4" height="7.6" viewBox="0 0 4.4 7.6"><path d="M.4 3L2.2 .5L4 3zM.4 4.6L2.2 7.1L4 4.6z" fill="#bdbdbd"/></svg>
</div></body></html>
